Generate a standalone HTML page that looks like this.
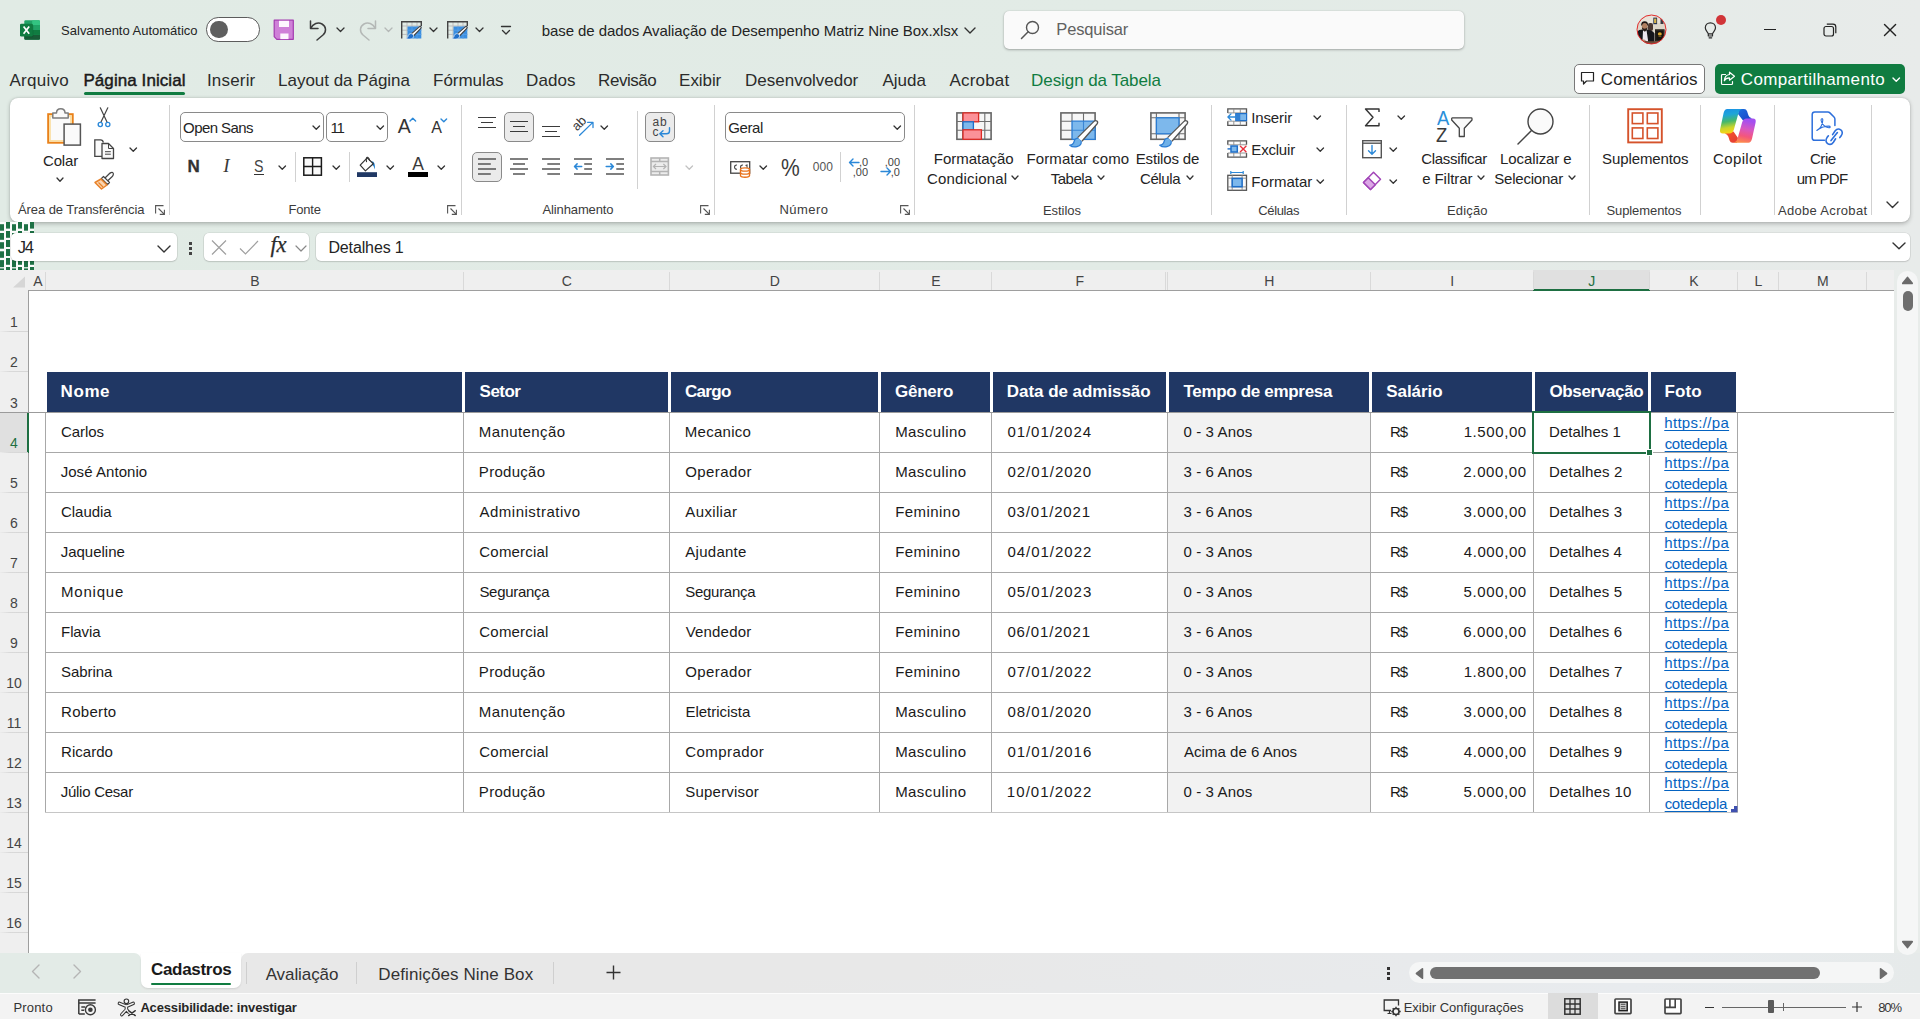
<!DOCTYPE html>
<html lang="pt-BR"><head><meta charset="utf-8"><title>base de dados Avaliação de Desempenho Matriz Nine Box.xlsx - Excel</title>
<style>
html,body{margin:0;padding:0;}
body{width:1920px;height:1019px;overflow:hidden;font-family:"Liberation Sans",sans-serif;color:#242424;}
#app{position:relative;width:1920px;height:1019px;overflow:hidden;background:linear-gradient(90deg,#e1ebe5 0%,#e2ebe6 60%,#e5ebe8 85%,#e8ebea 100%);}
.a{position:absolute;box-sizing:border-box;}
.t{position:absolute;white-space:nowrap;line-height:20px;}
.bl{display:inline-block;width:0;height:0;}
svg{overflow:visible;}
</style></head><body><div id="app">
<svg class="a" style="left:20px;top:19.5px;" width="20" height="20" viewBox="0 0 20 20">
<path d="M5.5 0.2 H18.8 Q20 0.2 20 1.4 V18.6 Q20 19.8 18.8 19.8 H5.5 Q4.3 19.8 4.3 18.6 V1.4 Q4.3 0.2 5.5 0.2 Z" fill="#21a366"/>
<path d="M12.2 0.2 H18.8 Q20 0.2 20 1.4 V5.1 H12.2 Z" fill="#33c481"/>
<rect x="4.3" y="5.1" width="7.9" height="4.9" fill="#107c41"/><rect x="12.2" y="5.1" width="7.8" height="4.9" fill="#21a366"/>
<rect x="4.3" y="10" width="7.9" height="4.9" fill="#185c37"/><rect x="12.2" y="10" width="7.8" height="4.9" fill="#107c41"/>
<path d="M4.3 14.9 H20 V18.6 Q20 19.8 18.8 19.8 H5.5 Q4.3 19.8 4.3 18.6 Z" fill="#185c37"/>
<path d="M4.3 4.5 H12 Q13.2 4.5 13.2 5.7 V16 Q13.2 17.2 12 17.2 H4.3 Z" fill="#0b4a27" opacity="0.45"/>
<rect x="0" y="3.8" width="12.8" height="12.8" rx="1.3" fill="#107c41"/>
<path d="M3.6 6.6 L9.2 13.8 M9.2 6.6 L3.6 13.8" stroke="#fff" stroke-width="1.7" fill="none"/></svg>
<span class="t" style="top:20.90px;font-size:13px;left:61.11px;letter-spacing:-0.007px;color:#242424;">Salvamento Automático</span>
<div class="a" style="left:206px;top:17.3px;width:54px;height:24.4px;border:1.3px solid #5c5c5c;border-radius:12.2px;background:#fff;"></div>
<div class="a" style="left:210.4px;top:20.9px;width:17.6px;height:17.6px;border-radius:9px;background:#5f5f5f;"></div>
<svg class="a" style="left:273px;top:19px;" width="22" height="22" viewBox="0 0 22 22"><path d="M1.2 1.2 H20.3 V20.3 H3.8 L1.2 17.7 Z" fill="#cf80d8" stroke="#a33bb0" stroke-width="1.2" stroke-linejoin="round"/>
<rect x="6" y="1.8" width="10" height="6.2" fill="#fdf6fe"/>
<rect x="7.3" y="14.5" width="8.2" height="5.6" fill="#fdf6fe"/></svg>
<svg class="a" style="left:308px;top:18.5px;" width="20" height="22" viewBox="0 0 20 22"><path d="M2.5 2 V9.5 H10 M2.8 9.3 C5 4.5 10 2.8 14 5 C18.5 7.5 18.5 13 15 16 L9 21" fill="none" stroke="#3b3b3b" stroke-width="1.5" stroke-linecap="round" stroke-linejoin="round"/></svg>
<svg class="a" style="left:335.0px;top:26.25px;" width="11" height="7" viewBox="0 0 11 7"><path d="M2 2 L5.5 5.5 L9 2" fill="none" stroke="#333" stroke-width="1.3" stroke-linecap="round" stroke-linejoin="round"/></svg>
<svg class="a" style="left:358px;top:19px;" width="20" height="22" viewBox="0 0 20 22"><path d="M17.5 2 V9.5 H10 M17.2 9.3 C15 4.5 10 2.8 6 5 C1.5 7.5 1.5 13 5 16 L11 21" fill="none" stroke="#b4b8b6" stroke-width="1.5" stroke-linecap="round" stroke-linejoin="round"/></svg>
<svg class="a" style="left:382.5px;top:26.25px;" width="11" height="7" viewBox="0 0 11 7"><path d="M2 2 L5.5 5.5 L9 2" fill="none" stroke="#b4b8b6" stroke-width="1.3" stroke-linecap="round" stroke-linejoin="round"/></svg>
<svg class="a" style="left:400.5px;top:21px;" width="22" height="20" viewBox="0 0 22 20"><path d="M6 0.6 V17.5 M11 0.6 V17.5 M16 0.6 V17.5 M0.6 5 H20.3 M0.6 9.2 H20.3 M0.6 13.4 H20.3" stroke="#bdbdbd" stroke-width="1" fill="none"/>
<rect x="6.5" y="5.5" width="13.8" height="12" fill="#3a8ee0"/>
<path d="M11 5.5 V17.5 M16 5.5 V17.5 M6.5 9.2 H20.3 M6.5 13.4 H20.3" stroke="#5aa2e8" stroke-width="0.8" fill="none"/>
<path d="M0.7 17.5 V0.7 H20.3 V5" fill="none" stroke="#444" stroke-width="1.4"/>
<path d="M10.3 12.8 L18.3 5.8 C19.5 4.8 20.8 6.2 19.8 7.3 L12.5 15" fill="#fff" stroke="#444" stroke-width="1.1" stroke-linejoin="round"/>
<path d="M4.5 17.3 C6.5 17 7 15.8 7.3 14.6 C7.8 12.6 10.3 12 11.8 13.3 C13.3 14.8 12.6 17.2 10.3 17.8 C8.3 18.3 6 18.2 4.5 17.3 Z" fill="#1f6fc9" stroke="#e8f1fb" stroke-width="0.7"/></svg>
<svg class="a" style="left:427.5px;top:26.25px;" width="11" height="7" viewBox="0 0 11 7"><path d="M2 2 L5.5 5.5 L9 2" fill="none" stroke="#333" stroke-width="1.3" stroke-linecap="round" stroke-linejoin="round"/></svg>
<svg class="a" style="left:446.5px;top:21px;" width="22" height="20" viewBox="0 0 22 20"><path d="M6 0.6 V17.5 M11 0.6 V17.5 M16 0.6 V17.5 M0.6 5 H20.3 M0.6 9.2 H20.3 M0.6 13.4 H20.3" stroke="#bdbdbd" stroke-width="1" fill="none"/>
<rect x="6.5" y="5.5" width="13.8" height="12" fill="#3a8ee0"/>
<path d="M11 5.5 V17.5 M16 5.5 V17.5 M6.5 9.2 H20.3 M6.5 13.4 H20.3" stroke="#5aa2e8" stroke-width="0.8" fill="none"/>
<path d="M0.7 17.5 V0.7 H20.3 V5" fill="none" stroke="#444" stroke-width="1.4"/>
<path d="M10.3 12.8 L18.3 5.8 C19.5 4.8 20.8 6.2 19.8 7.3 L12.5 15" fill="#fff" stroke="#444" stroke-width="1.1" stroke-linejoin="round"/>
<path d="M4.5 17.3 C6.5 17 7 15.8 7.3 14.6 C7.8 12.6 10.3 12 11.8 13.3 C13.3 14.8 12.6 17.2 10.3 17.8 C8.3 18.3 6 18.2 4.5 17.3 Z" fill="#1f6fc9" stroke="#e8f1fb" stroke-width="0.7"/></svg>
<svg class="a" style="left:474.0px;top:26.25px;" width="11" height="7" viewBox="0 0 11 7"><path d="M2 2 L5.5 5.5 L9 2" fill="none" stroke="#333" stroke-width="1.3" stroke-linecap="round" stroke-linejoin="round"/></svg>
<svg class="a" style="left:500px;top:25px;" width="12" height="12" viewBox="0 0 12 12"><path d="M1.5 1.5 H10.5" stroke="#333" stroke-width="1.3" stroke-linecap="round"/><path d="M2.5 5.5 L6 9 L9.5 5.5" fill="none" stroke="#333" stroke-width="1.3" stroke-linecap="round" stroke-linejoin="round"/></svg>
<span class="t" style="top:20.51px;font-size:15px;left:541.73px;letter-spacing:-0.077px;color:#242424;">base de dados Avaliação de Desempenho Matriz Nine Box.xlsx</span>
<svg class="a" style="left:963.0px;top:25.5px;" width="14" height="9" viewBox="0 0 14 9"><path d="M2 2 L7.0 7 L12 2" fill="none" stroke="#333" stroke-width="1.4" stroke-linecap="round" stroke-linejoin="round"/></svg>
<div class="a" style="left:1004px;top:11px;width:460px;height:38px;border-radius:5px;background:#fafafa;box-shadow:0 1px 2.5px rgba(0,0,0,.28),0 0 1px rgba(0,0,0,.2);"></div>
<svg class="a" style="left:1019px;top:19px;" width="22" height="22" viewBox="0 0 22 22"><circle cx="13.5" cy="8.5" r="6" fill="none" stroke="#555" stroke-width="1.4"/><path d="M9.2 12.8 L2.5 19.5" stroke="#555" stroke-width="1.5" stroke-linecap="round"/></svg>
<span class="t" style="top:19.02px;font-size:16.5px;left:1056.35px;letter-spacing:-0.181px;color:#616161;">Pesquisar</span>
<svg class="a" style="left:1636px;top:14.3px;" width="31" height="31" viewBox="0 0 31 31"><defs><clipPath id="avc"><circle cx="15.5" cy="15.5" r="14.4"/></clipPath></defs>
<g clip-path="url(#avc)">
<rect x="0" y="0" width="31" height="31" fill="#ded6ca"/>
<rect x="0" y="0" width="31" height="9" fill="#e9e3da"/>
<rect x="17.3" y="3.6" width="3.8" height="6.6" fill="#2a3550"/><rect x="18.1" y="4.6" width="2.2" height="4.4" fill="#d8b34a"/>
<rect x="24.5" y="5" width="3" height="5" fill="#3a3a42"/>
<rect x="12" y="9" width="5" height="8" rx="2" fill="#4a3630"/>
<ellipse cx="8.6" cy="10.3" rx="3.3" ry="3" fill="#1d1513"/>
<ellipse cx="8.7" cy="12.6" rx="2.8" ry="3.5" fill="#b27f60"/>
<path d="M5.9 13 Q6.5 14.6 8.7 14.7 Q10.9 14.6 11.5 13 Q11.6 16.6 8.7 17.2 Q5.8 16.6 5.9 13 Z" fill="#2a1c18"/>
<path d="M0 31 V19 Q2 15.8 6.3 15.6 L8.7 17.6 L11.2 15.6 Q16 16 18.5 19.5 V31 Z" fill="#15151a"/>
<path d="M7 16.6 L8.7 17.8 L10.6 16.6 L12.2 27.5 H6.5 Z" fill="#e9e5ee"/>
<rect x="19" y="15.3" width="9.6" height="12.3" fill="#17130f"/><rect x="19.9" y="16.2" width="7.8" height="10.5" fill="none" stroke="#3a332b" stroke-width="0.6"/>
<ellipse cx="23.8" cy="19.9" rx="2" ry="1.7" fill="#d8a62e"/><rect x="22.5" y="22.3" width="2.8" height="0.7" fill="#8f7130"/>
<path d="M3 31 V27.6 Q8 25.8 11 27.2 H31 V31 Z" fill="#6d4b3a"/>
<ellipse cx="7.2" cy="26.6" rx="2.2" ry="1.2" fill="#b98a6b"/>
</g>
<circle cx="15.5" cy="15.5" r="14.5" fill="none" stroke="#e12a2a" stroke-width="1"/></svg>
<svg class="a" style="left:1703px;top:20.6px;" width="16" height="20" viewBox="0 0 16 20"><path d="M5.3 12.8 C4.8 10.7 2.3 9.7 2.3 6.8 C2.3 4 4.5 1.9 7.4 1.9 C10.3 1.9 12.5 4 12.5 6.8 C12.5 9.7 10 10.7 9.5 12.8 Z M5.3 12.8 V15 H9.5 V12.8 M6.1 16.8 H8.7" fill="none" stroke="#2b2b2b" stroke-width="1.2" stroke-linecap="round" stroke-linejoin="round"/></svg>
<div class="a" style="left:1716px;top:15px;width:10px;height:10px;border-radius:5px;background:#d13438;"></div>
<div class="a" style="left:1764px;top:28.6px;width:12px;height:1.5px;background:#222;"></div>
<svg class="a" style="left:1823px;top:23px;" width="14" height="14" viewBox="0 0 14 14"><rect x="1" y="3.5" width="9.5" height="9.5" rx="2" fill="none" stroke="#222" stroke-width="1.2"/><path d="M3.8 1.2 H10 Q12.8 1.2 12.8 4 V10.2" fill="none" stroke="#222" stroke-width="1.2"/></svg>
<svg class="a" style="left:1883px;top:23px;" width="14" height="14" viewBox="0 0 14 14"><path d="M1.5 1.4 L12.6 12.6 M12.6 1.4 L1.5 12.6" stroke="#222" stroke-width="1.4" stroke-linecap="round"/></svg>
<span class="t" style="top:71.00px;font-size:17px;left:9.47px;letter-spacing:0.268px;color:#2b2b2b;">Arquivo</span>
<span class="t" style="top:71.00px;font-size:17px;left:83.41px;letter-spacing:0.077px;color:#1a1a1a;-webkit-text-stroke:0.45px #1a1a1a;">Página Inicial</span>
<span class="t" style="top:71.00px;font-size:17px;left:206.93px;letter-spacing:0.186px;color:#2b2b2b;">Inserir</span>
<span class="t" style="top:71.00px;font-size:17px;left:278.11px;letter-spacing:-0.030px;color:#2b2b2b;">Layout da Página</span>
<span class="t" style="top:71.00px;font-size:17px;left:433.11px;letter-spacing:-0.050px;color:#2b2b2b;">Fórmulas</span>
<span class="t" style="top:71.00px;font-size:17px;left:526.11px;letter-spacing:0.092px;color:#2b2b2b;">Dados</span>
<span class="t" style="top:71.00px;font-size:17px;left:598.11px;letter-spacing:-0.469px;color:#2b2b2b;">Revisão</span>
<span class="t" style="top:71.00px;font-size:17px;left:679.11px;letter-spacing:-0.068px;color:#2b2b2b;">Exibir</span>
<span class="t" style="top:71.00px;font-size:17px;left:745.11px;letter-spacing:-0.019px;color:#2b2b2b;">Desenvolvedor</span>
<span class="t" style="top:71.00px;font-size:17px;left:882.47px;letter-spacing:0.012px;color:#2b2b2b;">Ajuda</span>
<span class="t" style="top:71.00px;font-size:17px;left:949.47px;letter-spacing:0.177px;color:#2b2b2b;">Acrobat</span>
<span class="t" style="top:71.00px;font-size:17px;left:1031.11px;letter-spacing:-0.078px;color:#107c41;">Design da Tabela</span>
<div class="a" style="left:84px;top:92px;width:101px;height:3px;border-radius:1.5px;background:#107c41;"></div>
<div class="a" style="left:1574px;top:64px;width:131px;height:30px;border:1px solid #787878;border-radius:5px;background:#fff;"></div>
<svg class="a" style="left:1580px;top:71px;" width="15" height="15" viewBox="0 0 15 15"><path d="M1.5 1.5 H13.5 V10 H6.5 L3.5 13 V10 H1.5 Z" fill="none" stroke="#222" stroke-width="1.2" stroke-linejoin="round"/></svg>
<span class="t" style="top:70.00px;font-size:17px;left:1600.84px;letter-spacing:0.040px;color:#242424;">Comentários</span>
<div class="a" style="left:1715px;top:64px;width:190px;height:30px;border-radius:5px;background:#107c41;"></div>
<svg class="a" style="left:1720.2px;top:71px;" width="16" height="15" viewBox="0 0 16 15"><path d="M5.5 3.5 H2.5 Q1.5 3.5 1.5 4.5 V12.5 Q1.5 13.5 2.5 13.5 H11.5 Q12.5 13.5 12.5 12.5 V10.5" fill="none" stroke="#fff" stroke-width="1.2" stroke-linecap="round"/><path d="M9.5 1.2 L14.5 5.2 L9.5 9.2 V6.9 C7 6.9 5.2 7.8 4.3 9.8 C4.5 6.2 6.5 3.8 9.5 3.5 Z" fill="none" stroke="#fff" stroke-width="1.2" stroke-linejoin="round"/></svg>
<span class="t" style="top:70.00px;font-size:17px;left:1740.84px;letter-spacing:0.331px;color:#ffffff;">Compartilhamento</span>
<svg class="a" style="left:1891.25px;top:76.35px;" width="10" height="7" viewBox="0 0 10 7"><path d="M2 2 L5.25 5.3 L8.5 2" fill="none" stroke="#fff" stroke-width="1.4" stroke-linecap="round" stroke-linejoin="round"/></svg>
<div class="a" style="left:9.8px;top:97.8px;width:1900.2px;height:124.2px;border-radius:8px;background:#fff;box-shadow:0 1.5px 4px rgba(0,0,0,.22),0 0 1.5px rgba(0,0,0,.18);"></div>
<div class="a" style="left:169px;top:105px;width:1px;height:110px;background:#d1d1d1;"></div>
<div class="a" style="left:461px;top:105px;width:1px;height:110px;background:#d1d1d1;"></div>
<div class="a" style="left:714px;top:105px;width:1px;height:110px;background:#d1d1d1;"></div>
<div class="a" style="left:914px;top:105px;width:1px;height:110px;background:#d1d1d1;"></div>
<div class="a" style="left:1211px;top:105px;width:1px;height:110px;background:#d1d1d1;"></div>
<div class="a" style="left:1346px;top:105px;width:1px;height:110px;background:#d1d1d1;"></div>
<div class="a" style="left:1589px;top:105px;width:1px;height:110px;background:#d1d1d1;"></div>
<div class="a" style="left:1700px;top:105px;width:1px;height:110px;background:#d1d1d1;"></div>
<div class="a" style="left:1774px;top:105px;width:1px;height:110px;background:#d1d1d1;"></div>
<div class="a" style="left:1871px;top:105px;width:1px;height:110px;background:#d1d1d1;"></div>
<span class="t" style="top:199.80px;font-size:13px;left:17.97px;letter-spacing:-0.069px;color:#3b3b3b;">Área de Transferência</span>
<span class="t" style="top:199.80px;font-size:13px;left:288.43px;letter-spacing:-0.151px;color:#3b3b3b;">Fonte</span>
<span class="t" style="top:199.80px;font-size:13px;left:542.47px;letter-spacing:-0.121px;color:#3b3b3b;">Alinhamento</span>
<span class="t" style="top:199.80px;font-size:13px;left:779.43px;letter-spacing:0.472px;color:#3b3b3b;">Número</span>
<span class="t" style="top:200.50px;font-size:13px;left:1042.93px;letter-spacing:-0.043px;color:#3b3b3b;">Estilos</span>
<span class="t" style="top:200.50px;font-size:13px;left:1258.34px;letter-spacing:-0.372px;color:#3b3b3b;">Células</span>
<span class="t" style="top:200.80px;font-size:13px;left:1446.93px;letter-spacing:0.172px;color:#3b3b3b;">Edição</span>
<span class="t" style="top:200.80px;font-size:13px;left:1606.41px;letter-spacing:-0.083px;color:#3b3b3b;">Suplementos</span>
<span class="t" style="top:200.80px;font-size:13px;left:1777.97px;letter-spacing:0.319px;color:#3b3b3b;">Adobe Acrobat</span>
<svg class="a" style="left:155px;top:205px;" width="10" height="10" viewBox="0 0 10 10"><path d="M0.6 8.5 V0.6 H8.5" fill="none" stroke="#555" stroke-width="1.1"/><path d="M3.5 3.5 L9.2 9.2 M9.4 4.8 V9.4 H4.8" fill="none" stroke="#555" stroke-width="1.1"/></svg>
<svg class="a" style="left:447px;top:205px;" width="10" height="10" viewBox="0 0 10 10"><path d="M0.6 8.5 V0.6 H8.5" fill="none" stroke="#555" stroke-width="1.1"/><path d="M3.5 3.5 L9.2 9.2 M9.4 4.8 V9.4 H4.8" fill="none" stroke="#555" stroke-width="1.1"/></svg>
<svg class="a" style="left:699.5px;top:205px;" width="10" height="10" viewBox="0 0 10 10"><path d="M0.6 8.5 V0.6 H8.5" fill="none" stroke="#555" stroke-width="1.1"/><path d="M3.5 3.5 L9.2 9.2 M9.4 4.8 V9.4 H4.8" fill="none" stroke="#555" stroke-width="1.1"/></svg>
<svg class="a" style="left:900px;top:205px;" width="10" height="10" viewBox="0 0 10 10"><path d="M0.6 8.5 V0.6 H8.5" fill="none" stroke="#555" stroke-width="1.1"/><path d="M3.5 3.5 L9.2 9.2 M9.4 4.8 V9.4 H4.8" fill="none" stroke="#555" stroke-width="1.1"/></svg>
<svg class="a" style="left:0px;top:222px;" width="34" height="48" viewBox="0 0 34 48"><rect x="0" y="0" width="34" height="48" fill="#fbfcfb"/><rect x="0" y="2.2" width="4" height="6.5" fill="#1e7145"/><rect x="0" y="11" width="4" height="6.8" fill="#1e7145"/><rect x="0" y="20.2" width="4" height="6.5" fill="#1e7145"/><rect x="0" y="29.3" width="4" height="6.5" fill="#1e7145"/><rect x="0" y="38.1" width="4" height="7.1" fill="#1e7145"/><rect x="0" y="46.4" width="4" height="1.6" fill="#1e7145"/><rect x="6" y="0" width="4" height="6.6" fill="#1e7145"/><rect x="6" y="9" width="4" height="6.8" fill="#1e7145"/><rect x="6" y="18" width="4" height="7.0" fill="#1e7145"/><rect x="6" y="27" width="4" height="7.0" fill="#1e7145"/><rect x="6" y="36" width="4" height="6.8" fill="#1e7145"/><rect x="6" y="45" width="4" height="3.0" fill="#1e7145"/><rect x="12" y="2.2" width="4" height="6.5" fill="#1e7145"/><rect x="12" y="11" width="4" height="6.8" fill="#1e7145"/><rect x="12" y="20.2" width="4" height="6.5" fill="#1e7145"/><rect x="12" y="29.3" width="4" height="6.5" fill="#1e7145"/><rect x="12" y="38.1" width="4" height="7.1" fill="#1e7145"/><rect x="12" y="46.4" width="4" height="1.6" fill="#1e7145"/><rect x="18" y="0" width="4" height="6.6" fill="#1e7145"/><rect x="18" y="9" width="4" height="6.8" fill="#1e7145"/><rect x="18" y="18" width="4" height="7.0" fill="#1e7145"/><rect x="18" y="27" width="4" height="7.0" fill="#1e7145"/><rect x="18" y="36" width="4" height="6.8" fill="#1e7145"/><rect x="18" y="45" width="4" height="3.0" fill="#1e7145"/><rect x="24" y="2.2" width="4" height="6.5" fill="#1e7145"/><rect x="24" y="11" width="4" height="6.8" fill="#1e7145"/><rect x="24" y="20.2" width="4" height="6.5" fill="#1e7145"/><rect x="24" y="29.3" width="4" height="6.5" fill="#1e7145"/><rect x="24" y="38.1" width="4" height="7.1" fill="#1e7145"/><rect x="24" y="46.4" width="4" height="1.6" fill="#1e7145"/><rect x="30" y="0" width="4" height="6.6" fill="#1e7145"/><rect x="30" y="9" width="4" height="6.8" fill="#1e7145"/><rect x="30" y="18" width="4" height="7.0" fill="#1e7145"/><rect x="30" y="27" width="4" height="7.0" fill="#1e7145"/><rect x="30" y="36" width="4" height="6.8" fill="#1e7145"/><rect x="30" y="45" width="4" height="3.0" fill="#1e7145"/></svg>
<div class="a" style="left:11px;top:232.7px;width:166px;height:28.5px;border-radius:5px;background:#fff;box-shadow:0 0 0 0.6px rgba(0,0,0,.10),0 1px 1.5px rgba(0,0,0,.12);"></div>
<span class="t" style="top:236.61px;font-size:16.5px;left:17.64px;letter-spacing:-1.200px;color:#242424;">J4</span>
<svg class="a" style="left:156.3px;top:243.5px;" width="16" height="10" viewBox="0 0 16 10"><path d="M2 2 L8.0 8 L14 2" fill="none" stroke="#333" stroke-width="1.4" stroke-linecap="round" stroke-linejoin="round"/></svg>
<div class="a" style="left:189px;top:241.5px;width:3px;height:3px;background:#444;"></div>
<div class="a" style="left:189px;top:246.5px;width:3px;height:3px;background:#444;"></div>
<div class="a" style="left:189px;top:251.5px;width:3px;height:3px;background:#444;"></div>
<div class="a" style="left:204px;top:232.7px;width:105px;height:28.5px;border-radius:5px;background:#fff;box-shadow:0 0 0 0.6px rgba(0,0,0,.10),0 1px 1.5px rgba(0,0,0,.12);"></div>
<svg class="a" style="left:211px;top:240px;" width="16" height="15" viewBox="0 0 16 15"><path d="M1 0.5 L15 14.5 M15 0.5 L1 14.5" stroke="#a0a0a0" stroke-width="1.2" fill="none"/></svg>
<svg class="a" style="left:239px;top:240px;" width="20" height="15" viewBox="0 0 20 15"><path d="M1 8.5 L6.5 14 L19 1" stroke="#a0a0a0" stroke-width="1.2" fill="none"/></svg>
<span class="t" style="top:235.20px;font-size:22.5px;left:270.55px;letter-spacing:-0.300px;color:#2b2b2b;font-style:italic;font-family:'Liberation Serif', serif;-webkit-text-stroke:0.25px #2b2b2b;">fx</span>
<svg class="a" style="left:293.5px;top:244.0px;" width="14" height="9" viewBox="0 0 14 9"><path d="M2 2 L7.0 7 L12 2" fill="none" stroke="#888" stroke-width="1.2" stroke-linecap="round" stroke-linejoin="round"/></svg>
<div class="a" style="left:316px;top:232.7px;width:1593.5px;height:28.5px;border-radius:5px;background:#fff;box-shadow:0 0 0 0.6px rgba(0,0,0,.10),0 1px 1.5px rgba(0,0,0,.12);"></div>
<span class="t" style="top:237.61px;font-size:16px;left:328.39px;letter-spacing:-0.123px;color:#242424;">Detalhes 1</span>
<svg class="a" style="left:1890.5px;top:241.1px;" width="16" height="9" viewBox="0 0 16 9"><path d="M2 2 L8.0 7.8 L14 2" fill="none" stroke="#333" stroke-width="1.4" stroke-linecap="round" stroke-linejoin="round"/></svg>
<div class="a" style="left:0px;top:270px;width:1894px;height:683px;background:#fff;"></div>
<div class="a" style="left:0px;top:270px;width:1894px;height:21px;background:#efefef;"></div>
<div class="a" style="left:0px;top:291px;width:28px;height:662px;background:#efefef;"></div>
<svg class="a" style="left:12px;top:276px;" width="14" height="12" viewBox="0 0 14 12"><path d="M13 0.5 V11.5 H1 Z" fill="#d6d6d6"/></svg>
<div class="a" style="left:28px;top:290px;width:1866px;height:1.2px;background:#9e9e9e;"></div>
<div class="a" style="left:28px;top:290px;width:1.2px;height:663px;background:#9e9e9e;"></div>
<div class="a" style="left:1533px;top:270px;width:116.5px;height:19px;background:#e0e0e0;"></div>
<div class="a" style="left:1533px;top:288.5px;width:116.5px;height:2.5px;background:#1e6f42;"></div>
<div class="a" style="left:45px;top:272px;width:1px;height:18px;background:#d9d9d9;"></div>
<span class="t" style="top:271.21px;font-size:14px;left:37.80px;color:#444;transform:translateX(-50%);">A</span>
<div class="a" style="left:463px;top:272px;width:1px;height:18px;background:#d9d9d9;"></div>
<span class="t" style="top:271.21px;font-size:14px;left:254.80px;color:#444;transform:translateX(-50%);">B</span>
<div class="a" style="left:669px;top:272px;width:1px;height:18px;background:#d9d9d9;"></div>
<span class="t" style="top:271.21px;font-size:14px;left:566.80px;color:#444;transform:translateX(-50%);">C</span>
<div class="a" style="left:879px;top:272px;width:1px;height:18px;background:#d9d9d9;"></div>
<span class="t" style="top:271.21px;font-size:14px;left:774.80px;color:#444;transform:translateX(-50%);">D</span>
<div class="a" style="left:991px;top:272px;width:1px;height:18px;background:#d9d9d9;"></div>
<span class="t" style="top:271.21px;font-size:14px;left:935.80px;color:#444;transform:translateX(-50%);">E</span>
<div class="a" style="left:1167px;top:272px;width:1px;height:18px;background:#d9d9d9;"></div>
<span class="t" style="top:271.21px;font-size:14px;left:1079.80px;color:#444;transform:translateX(-50%);">F</span>
<div class="a" style="left:1370px;top:272px;width:1px;height:18px;background:#d9d9d9;"></div>
<span class="t" style="top:271.21px;font-size:14px;left:1269.30px;color:#444;transform:translateX(-50%);">H</span>
<div class="a" style="left:1533px;top:272px;width:1px;height:18px;background:#d9d9d9;"></div>
<span class="t" style="top:271.21px;font-size:14px;left:1452.30px;color:#444;transform:translateX(-50%);">I</span>
<div class="a" style="left:1649px;top:272px;width:1px;height:18px;background:#d9d9d9;"></div>
<span class="t" style="top:271.21px;font-size:14px;left:1591.80px;color:#1e6f42;transform:translateX(-50%);">J</span>
<div class="a" style="left:1737px;top:272px;width:1px;height:18px;background:#d9d9d9;"></div>
<span class="t" style="top:271.21px;font-size:14px;left:1693.80px;color:#444;transform:translateX(-50%);">K</span>
<div class="a" style="left:1778px;top:272px;width:1px;height:18px;background:#d9d9d9;"></div>
<span class="t" style="top:271.21px;font-size:14px;left:1758.30px;color:#444;transform:translateX(-50%);">L</span>
<div class="a" style="left:1866px;top:272px;width:1px;height:18px;background:#d9d9d9;"></div>
<span class="t" style="top:271.21px;font-size:14px;left:1822.80px;color:#444;transform:translateX(-50%);">M</span>
<div class="a" style="left:1165px;top:272px;width:1px;height:18px;background:#d9d9d9;"></div>
<div class="a" style="left:0px;top:331px;width:28px;height:1px;background:linear-gradient(90deg,#ececec 0,#d9d9d9 35%,#d6d6d6 100%);"></div>
<span class="t" style="top:312.21px;font-size:14px;left:14.00px;color:#444;transform:translateX(-50%);">1</span>
<div class="a" style="left:0px;top:371px;width:28px;height:1px;background:linear-gradient(90deg,#ececec 0,#d9d9d9 35%,#d6d6d6 100%);"></div>
<span class="t" style="top:352.21px;font-size:14px;left:14.00px;color:#444;transform:translateX(-50%);">2</span>
<span class="t" style="top:393.21px;font-size:14px;left:14.00px;color:#444;transform:translateX(-50%);">3</span>
<div class="a" style="left:0px;top:413px;width:27px;height:39px;background:#e0e0e0;"></div>
<div class="a" style="left:26.5px;top:413px;width:2.2px;height:39.5px;background:#1e6f42;"></div>
<div class="a" style="left:0px;top:452px;width:28px;height:1px;background:linear-gradient(90deg,#ececec 0,#d9d9d9 35%,#d6d6d6 100%);"></div>
<span class="t" style="top:433.21px;font-size:14px;left:14.00px;color:#1e6f42;transform:translateX(-50%);">4</span>
<div class="a" style="left:0px;top:492px;width:28px;height:1px;background:linear-gradient(90deg,#ececec 0,#d9d9d9 35%,#d6d6d6 100%);"></div>
<span class="t" style="top:473.21px;font-size:14px;left:14.00px;color:#444;transform:translateX(-50%);">5</span>
<div class="a" style="left:0px;top:532px;width:28px;height:1px;background:linear-gradient(90deg,#ececec 0,#d9d9d9 35%,#d6d6d6 100%);"></div>
<span class="t" style="top:513.21px;font-size:14px;left:14.00px;color:#444;transform:translateX(-50%);">6</span>
<div class="a" style="left:0px;top:572px;width:28px;height:1px;background:linear-gradient(90deg,#ececec 0,#d9d9d9 35%,#d6d6d6 100%);"></div>
<span class="t" style="top:553.21px;font-size:14px;left:14.00px;color:#444;transform:translateX(-50%);">7</span>
<div class="a" style="left:0px;top:612px;width:28px;height:1px;background:linear-gradient(90deg,#ececec 0,#d9d9d9 35%,#d6d6d6 100%);"></div>
<span class="t" style="top:593.21px;font-size:14px;left:14.00px;color:#444;transform:translateX(-50%);">8</span>
<div class="a" style="left:0px;top:652px;width:28px;height:1px;background:linear-gradient(90deg,#ececec 0,#d9d9d9 35%,#d6d6d6 100%);"></div>
<span class="t" style="top:633.21px;font-size:14px;left:14.00px;color:#444;transform:translateX(-50%);">9</span>
<div class="a" style="left:0px;top:692px;width:28px;height:1px;background:linear-gradient(90deg,#ececec 0,#d9d9d9 35%,#d6d6d6 100%);"></div>
<span class="t" style="top:673.21px;font-size:14px;left:14.00px;color:#444;transform:translateX(-50%);">10</span>
<div class="a" style="left:0px;top:732px;width:28px;height:1px;background:linear-gradient(90deg,#ececec 0,#d9d9d9 35%,#d6d6d6 100%);"></div>
<span class="t" style="top:713.21px;font-size:14px;left:14.00px;color:#444;transform:translateX(-50%);">11</span>
<div class="a" style="left:0px;top:772px;width:28px;height:1px;background:linear-gradient(90deg,#ececec 0,#d9d9d9 35%,#d6d6d6 100%);"></div>
<span class="t" style="top:753.21px;font-size:14px;left:14.00px;color:#444;transform:translateX(-50%);">12</span>
<div class="a" style="left:0px;top:812px;width:28px;height:1px;background:linear-gradient(90deg,#ececec 0,#d9d9d9 35%,#d6d6d6 100%);"></div>
<span class="t" style="top:793.21px;font-size:14px;left:14.00px;color:#444;transform:translateX(-50%);">13</span>
<div class="a" style="left:0px;top:852px;width:28px;height:1px;background:linear-gradient(90deg,#ececec 0,#d9d9d9 35%,#d6d6d6 100%);"></div>
<span class="t" style="top:833.21px;font-size:14px;left:14.00px;color:#444;transform:translateX(-50%);">14</span>
<div class="a" style="left:0px;top:892px;width:28px;height:1px;background:linear-gradient(90deg,#ececec 0,#d9d9d9 35%,#d6d6d6 100%);"></div>
<span class="t" style="top:873.21px;font-size:14px;left:14.00px;color:#444;transform:translateX(-50%);">15</span>
<div class="a" style="left:0px;top:932px;width:28px;height:1px;background:linear-gradient(90deg,#ececec 0,#d9d9d9 35%,#d6d6d6 100%);"></div>
<span class="t" style="top:913.21px;font-size:14px;left:14.00px;color:#444;transform:translateX(-50%);">16</span>
<div class="a" style="left:47px;top:372px;width:415px;height:40px;background:#203764;"></div>
<span class="t" style="top:382.00px;font-size:17px;left:60.56px;letter-spacing:0.595px;color:#fff;font-weight:bold;">Nome</span>
<div class="a" style="left:465px;top:372px;width:203px;height:40px;background:#203764;"></div>
<span class="t" style="top:382.00px;font-size:17px;left:479.61px;letter-spacing:-0.555px;color:#fff;font-weight:bold;">Setor</span>
<div class="a" style="left:671px;top:372px;width:207px;height:40px;background:#203764;"></div>
<span class="t" style="top:382.00px;font-size:17px;left:685.00px;letter-spacing:-0.691px;color:#fff;font-weight:bold;">Cargo</span>
<div class="a" style="left:881px;top:372px;width:109px;height:40px;background:#203764;"></div>
<span class="t" style="top:382.00px;font-size:17px;left:895.00px;letter-spacing:-0.234px;color:#fff;font-weight:bold;">Gênero</span>
<div class="a" style="left:993px;top:372px;width:173px;height:40px;background:#203764;"></div>
<span class="t" style="top:382.00px;font-size:17px;left:1006.86px;letter-spacing:-0.051px;color:#fff;font-weight:bold;">Data de admissão</span>
<div class="a" style="left:1169px;top:372px;width:200px;height:40px;background:#203764;"></div>
<span class="t" style="top:382.00px;font-size:17px;left:1183.51px;letter-spacing:-0.320px;color:#fff;font-weight:bold;">Tempo de empresa</span>
<div class="a" style="left:1372px;top:372px;width:160px;height:40px;background:#203764;"></div>
<span class="t" style="top:382.00px;font-size:17px;left:1386.21px;letter-spacing:-0.042px;color:#fff;font-weight:bold;">Salário</span>
<div class="a" style="left:1535px;top:372px;width:113px;height:40px;background:#203764;"></div>
<span class="t" style="top:382.00px;font-size:17px;left:1549.40px;letter-spacing:-0.342px;color:#fff;font-weight:bold;">Observação</span>
<div class="a" style="left:1651px;top:372px;width:85px;height:40px;background:#203764;"></div>
<span class="t" style="top:382.00px;font-size:17px;left:1664.56px;letter-spacing:0.091px;color:#fff;font-weight:bold;">Foto</span>
<div class="a" style="left:0px;top:412px;width:1894px;height:1px;background:#9b9b9b;"></div>
<div class="a" style="left:1168px;top:413px;width:202px;height:399px;background:#f2f2f2;"></div>
<div class="a" style="left:45px;top:413px;width:1px;height:400px;background:#a8a8a8;"></div>
<div class="a" style="left:463px;top:413px;width:1px;height:400px;background:#a8a8a8;"></div>
<div class="a" style="left:669px;top:413px;width:1px;height:400px;background:#a8a8a8;"></div>
<div class="a" style="left:879px;top:413px;width:1px;height:400px;background:#a8a8a8;"></div>
<div class="a" style="left:991px;top:413px;width:1px;height:400px;background:#a8a8a8;"></div>
<div class="a" style="left:1167px;top:413px;width:1px;height:400px;background:#a8a8a8;"></div>
<div class="a" style="left:1370px;top:413px;width:1px;height:400px;background:#a8a8a8;"></div>
<div class="a" style="left:1533px;top:413px;width:1px;height:400px;background:#a8a8a8;"></div>
<div class="a" style="left:1649px;top:413px;width:1px;height:400px;background:#a8a8a8;"></div>
<div class="a" style="left:1737px;top:413px;width:1px;height:400px;background:#a8a8a8;"></div>
<div class="a" style="left:45px;top:452px;width:1693px;height:1px;background:#a8a8a8;"></div>
<div class="a" style="left:45px;top:492px;width:1693px;height:1px;background:#a8a8a8;"></div>
<div class="a" style="left:45px;top:532px;width:1693px;height:1px;background:#a8a8a8;"></div>
<div class="a" style="left:45px;top:572px;width:1693px;height:1px;background:#a8a8a8;"></div>
<div class="a" style="left:45px;top:612px;width:1693px;height:1px;background:#a8a8a8;"></div>
<div class="a" style="left:45px;top:652px;width:1693px;height:1px;background:#a8a8a8;"></div>
<div class="a" style="left:45px;top:692px;width:1693px;height:1px;background:#a8a8a8;"></div>
<div class="a" style="left:45px;top:732px;width:1693px;height:1px;background:#a8a8a8;"></div>
<div class="a" style="left:45px;top:772px;width:1693px;height:1px;background:#a8a8a8;"></div>
<div class="a" style="left:45px;top:812px;width:1693px;height:1px;background:#c6c6c6;"></div>
<span class="t" style="top:422.01px;font-size:15px;left:60.94px;letter-spacing:-0.051px;color:#1a1a1a;">Carlos</span>
<span class="t" style="top:422.01px;font-size:15px;left:478.87px;letter-spacing:0.400px;color:#1a1a1a;">Manutenção</span>
<span class="t" style="top:422.01px;font-size:15px;left:684.77px;letter-spacing:0.280px;color:#1a1a1a;">Mecanico</span>
<span class="t" style="top:422.01px;font-size:15px;left:895.17px;letter-spacing:0.416px;color:#1a1a1a;">Masculino</span>
<span class="t" style="top:422.01px;font-size:15px;left:1007.41px;letter-spacing:0.950px;color:#1a1a1a;">01/01/2024</span>
<span class="t" style="top:422.01px;font-size:15px;left:1183.41px;letter-spacing:0.131px;color:#1a1a1a;">0 - 3 Anos</span>
<span class="t" style="top:422.01px;font-size:15px;left:1390.07px;letter-spacing:-1.200px;color:#1a1a1a;">R$</span>
<span class="t" style="top:422.01px;font-size:15px;right:393.22px;letter-spacing:0.591px;color:#1a1a1a;">1.500,00</span>
<span class="t" style="top:422.01px;font-size:15px;left:1549.07px;letter-spacing:-0.006px;color:#1a1a1a;">Detalhes 1</span>
<span class="t" style="top:413.01px;font-size:15px;left:1664.26px;letter-spacing:0.313px;color:#0563c1;text-decoration:underline;text-underline-offset:1.5px;text-decoration-thickness:1px;text-decoration-skip-ink:none;">https://pa</span>
<span class="t" style="top:433.51px;font-size:15px;left:1664.66px;letter-spacing:-0.303px;color:#0563c1;text-decoration:underline;text-underline-offset:1.5px;text-decoration-thickness:1px;text-decoration-skip-ink:none;">cotedepla</span>
<span class="t" style="top:462.01px;font-size:15px;left:60.67px;letter-spacing:0.060px;color:#1a1a1a;">José Antonio</span>
<span class="t" style="top:462.01px;font-size:15px;left:478.87px;letter-spacing:0.277px;color:#1a1a1a;">Produção</span>
<span class="t" style="top:462.01px;font-size:15px;left:685.29px;letter-spacing:0.412px;color:#1a1a1a;">Operador</span>
<span class="t" style="top:462.01px;font-size:15px;left:895.17px;letter-spacing:0.416px;color:#1a1a1a;">Masculino</span>
<span class="t" style="top:462.01px;font-size:15px;left:1007.41px;letter-spacing:0.966px;color:#1a1a1a;">02/01/2020</span>
<span class="t" style="top:462.01px;font-size:15px;left:1183.43px;letter-spacing:0.130px;color:#1a1a1a;">3 - 6 Anos</span>
<span class="t" style="top:462.01px;font-size:15px;left:1390.07px;letter-spacing:-1.200px;color:#1a1a1a;">R$</span>
<span class="t" style="top:462.01px;font-size:15px;right:393.18px;letter-spacing:0.636px;color:#1a1a1a;">2.000,00</span>
<span class="t" style="top:462.01px;font-size:15px;left:1549.07px;letter-spacing:0.163px;color:#1a1a1a;">Detalhes 2</span>
<span class="t" style="top:453.01px;font-size:15px;left:1664.26px;letter-spacing:0.313px;color:#0563c1;text-decoration:underline;text-underline-offset:1.5px;text-decoration-thickness:1px;text-decoration-skip-ink:none;">https://pa</span>
<span class="t" style="top:473.51px;font-size:15px;left:1664.66px;letter-spacing:-0.303px;color:#0563c1;text-decoration:underline;text-underline-offset:1.5px;text-decoration-thickness:1px;text-decoration-skip-ink:none;">cotedepla</span>
<span class="t" style="top:502.01px;font-size:15px;left:60.94px;letter-spacing:-0.019px;color:#1a1a1a;">Claudia</span>
<span class="t" style="top:502.01px;font-size:15px;left:479.47px;letter-spacing:0.497px;color:#1a1a1a;">Administrativo</span>
<span class="t" style="top:502.01px;font-size:15px;left:685.37px;letter-spacing:0.342px;color:#1a1a1a;">Auxiliar</span>
<span class="t" style="top:502.01px;font-size:15px;left:895.17px;letter-spacing:0.451px;color:#1a1a1a;">Feminino</span>
<span class="t" style="top:502.01px;font-size:15px;left:1007.41px;letter-spacing:0.838px;color:#1a1a1a;">03/01/2021</span>
<span class="t" style="top:502.01px;font-size:15px;left:1183.43px;letter-spacing:0.130px;color:#1a1a1a;">3 - 6 Anos</span>
<span class="t" style="top:502.01px;font-size:15px;left:1390.07px;letter-spacing:-1.200px;color:#1a1a1a;">R$</span>
<span class="t" style="top:502.01px;font-size:15px;right:393.20px;letter-spacing:0.610px;color:#1a1a1a;">3.000,00</span>
<span class="t" style="top:502.01px;font-size:15px;left:1549.07px;letter-spacing:0.152px;color:#1a1a1a;">Detalhes 3</span>
<span class="t" style="top:493.01px;font-size:15px;left:1664.26px;letter-spacing:0.313px;color:#0563c1;text-decoration:underline;text-underline-offset:1.5px;text-decoration-thickness:1px;text-decoration-skip-ink:none;">https://pa</span>
<span class="t" style="top:513.51px;font-size:15px;left:1664.66px;letter-spacing:-0.303px;color:#0563c1;text-decoration:underline;text-underline-offset:1.5px;text-decoration-thickness:1px;text-decoration-skip-ink:none;">cotedepla</span>
<span class="t" style="top:542.01px;font-size:15px;left:60.67px;letter-spacing:-0.002px;color:#1a1a1a;">Jaqueline</span>
<span class="t" style="top:542.01px;font-size:15px;left:479.34px;letter-spacing:0.194px;color:#1a1a1a;">Comercial</span>
<span class="t" style="top:542.01px;font-size:15px;left:685.37px;letter-spacing:0.254px;color:#1a1a1a;">Ajudante</span>
<span class="t" style="top:542.01px;font-size:15px;left:895.17px;letter-spacing:0.451px;color:#1a1a1a;">Feminino</span>
<span class="t" style="top:542.01px;font-size:15px;left:1007.41px;letter-spacing:0.985px;color:#1a1a1a;">04/01/2022</span>
<span class="t" style="top:542.01px;font-size:15px;left:1183.41px;letter-spacing:0.131px;color:#1a1a1a;">0 - 3 Anos</span>
<span class="t" style="top:542.01px;font-size:15px;left:1390.07px;letter-spacing:-1.200px;color:#1a1a1a;">R$</span>
<span class="t" style="top:542.01px;font-size:15px;right:393.24px;letter-spacing:0.577px;color:#1a1a1a;">4.000,00</span>
<span class="t" style="top:542.01px;font-size:15px;left:1549.07px;letter-spacing:0.128px;color:#1a1a1a;">Detalhes 4</span>
<span class="t" style="top:533.01px;font-size:15px;left:1664.26px;letter-spacing:0.313px;color:#0563c1;text-decoration:underline;text-underline-offset:1.5px;text-decoration-thickness:1px;text-decoration-skip-ink:none;">https://pa</span>
<span class="t" style="top:553.51px;font-size:15px;left:1664.66px;letter-spacing:-0.303px;color:#0563c1;text-decoration:underline;text-underline-offset:1.5px;text-decoration-thickness:1px;text-decoration-skip-ink:none;">cotedepla</span>
<span class="t" style="top:582.01px;font-size:15px;left:61.07px;letter-spacing:0.775px;color:#1a1a1a;">Monique</span>
<span class="t" style="top:582.01px;font-size:15px;left:479.42px;letter-spacing:-0.298px;color:#1a1a1a;">Segurança</span>
<span class="t" style="top:582.01px;font-size:15px;left:685.32px;letter-spacing:-0.298px;color:#1a1a1a;">Segurança</span>
<span class="t" style="top:582.01px;font-size:15px;left:895.17px;letter-spacing:0.451px;color:#1a1a1a;">Feminino</span>
<span class="t" style="top:582.01px;font-size:15px;left:1007.41px;letter-spacing:0.974px;color:#1a1a1a;">05/01/2023</span>
<span class="t" style="top:582.01px;font-size:15px;left:1183.41px;letter-spacing:0.131px;color:#1a1a1a;">0 - 3 Anos</span>
<span class="t" style="top:582.01px;font-size:15px;left:1390.07px;letter-spacing:-1.200px;color:#1a1a1a;">R$</span>
<span class="t" style="top:582.01px;font-size:15px;right:393.20px;letter-spacing:0.614px;color:#1a1a1a;">5.000,00</span>
<span class="t" style="top:582.01px;font-size:15px;left:1549.07px;letter-spacing:0.149px;color:#1a1a1a;">Detalhes 5</span>
<span class="t" style="top:573.01px;font-size:15px;left:1664.26px;letter-spacing:0.313px;color:#0563c1;text-decoration:underline;text-underline-offset:1.5px;text-decoration-thickness:1px;text-decoration-skip-ink:none;">https://pa</span>
<span class="t" style="top:593.51px;font-size:15px;left:1664.66px;letter-spacing:-0.303px;color:#0563c1;text-decoration:underline;text-underline-offset:1.5px;text-decoration-thickness:1px;text-decoration-skip-ink:none;">cotedepla</span>
<span class="t" style="top:622.01px;font-size:15px;left:61.07px;letter-spacing:-0.097px;color:#1a1a1a;">Flavia</span>
<span class="t" style="top:622.01px;font-size:15px;left:479.34px;letter-spacing:0.194px;color:#1a1a1a;">Comercial</span>
<span class="t" style="top:622.01px;font-size:15px;left:685.63px;letter-spacing:0.197px;color:#1a1a1a;">Vendedor</span>
<span class="t" style="top:622.01px;font-size:15px;left:895.17px;letter-spacing:0.451px;color:#1a1a1a;">Feminino</span>
<span class="t" style="top:622.01px;font-size:15px;left:1007.41px;letter-spacing:0.838px;color:#1a1a1a;">06/01/2021</span>
<span class="t" style="top:622.01px;font-size:15px;left:1183.43px;letter-spacing:0.130px;color:#1a1a1a;">3 - 6 Anos</span>
<span class="t" style="top:622.01px;font-size:15px;left:1390.07px;letter-spacing:-1.200px;color:#1a1a1a;">R$</span>
<span class="t" style="top:622.01px;font-size:15px;right:393.18px;letter-spacing:0.637px;color:#1a1a1a;">6.000,00</span>
<span class="t" style="top:622.01px;font-size:15px;left:1549.07px;letter-spacing:0.152px;color:#1a1a1a;">Detalhes 6</span>
<span class="t" style="top:613.01px;font-size:15px;left:1664.26px;letter-spacing:0.313px;color:#0563c1;text-decoration:underline;text-underline-offset:1.5px;text-decoration-thickness:1px;text-decoration-skip-ink:none;">https://pa</span>
<span class="t" style="top:633.51px;font-size:15px;left:1664.66px;letter-spacing:-0.303px;color:#0563c1;text-decoration:underline;text-underline-offset:1.5px;text-decoration-thickness:1px;text-decoration-skip-ink:none;">cotedepla</span>
<span class="t" style="top:662.01px;font-size:15px;left:61.02px;letter-spacing:-0.070px;color:#1a1a1a;">Sabrina</span>
<span class="t" style="top:662.01px;font-size:15px;left:478.87px;letter-spacing:0.277px;color:#1a1a1a;">Produção</span>
<span class="t" style="top:662.01px;font-size:15px;left:685.29px;letter-spacing:0.412px;color:#1a1a1a;">Operador</span>
<span class="t" style="top:662.01px;font-size:15px;left:895.17px;letter-spacing:0.451px;color:#1a1a1a;">Feminino</span>
<span class="t" style="top:662.01px;font-size:15px;left:1007.41px;letter-spacing:0.985px;color:#1a1a1a;">07/01/2022</span>
<span class="t" style="top:662.01px;font-size:15px;left:1183.41px;letter-spacing:0.131px;color:#1a1a1a;">0 - 3 Anos</span>
<span class="t" style="top:662.01px;font-size:15px;left:1390.07px;letter-spacing:-1.200px;color:#1a1a1a;">R$</span>
<span class="t" style="top:662.01px;font-size:15px;right:393.22px;letter-spacing:0.591px;color:#1a1a1a;">1.800,00</span>
<span class="t" style="top:662.01px;font-size:15px;left:1549.07px;letter-spacing:0.163px;color:#1a1a1a;">Detalhes 7</span>
<span class="t" style="top:653.01px;font-size:15px;left:1664.26px;letter-spacing:0.313px;color:#0563c1;text-decoration:underline;text-underline-offset:1.5px;text-decoration-thickness:1px;text-decoration-skip-ink:none;">https://pa</span>
<span class="t" style="top:673.51px;font-size:15px;left:1664.66px;letter-spacing:-0.303px;color:#0563c1;text-decoration:underline;text-underline-offset:1.5px;text-decoration-thickness:1px;text-decoration-skip-ink:none;">cotedepla</span>
<span class="t" style="top:702.01px;font-size:15px;left:61.07px;letter-spacing:0.298px;color:#1a1a1a;">Roberto</span>
<span class="t" style="top:702.01px;font-size:15px;left:478.87px;letter-spacing:0.400px;color:#1a1a1a;">Manutenção</span>
<span class="t" style="top:702.01px;font-size:15px;left:685.47px;letter-spacing:-0.020px;color:#1a1a1a;">Eletricista</span>
<span class="t" style="top:702.01px;font-size:15px;left:895.17px;letter-spacing:0.416px;color:#1a1a1a;">Masculino</span>
<span class="t" style="top:702.01px;font-size:15px;left:1007.41px;letter-spacing:0.966px;color:#1a1a1a;">08/01/2020</span>
<span class="t" style="top:702.01px;font-size:15px;left:1183.43px;letter-spacing:0.130px;color:#1a1a1a;">3 - 6 Anos</span>
<span class="t" style="top:702.01px;font-size:15px;left:1390.07px;letter-spacing:-1.200px;color:#1a1a1a;">R$</span>
<span class="t" style="top:702.01px;font-size:15px;right:393.20px;letter-spacing:0.610px;color:#1a1a1a;">3.000,00</span>
<span class="t" style="top:702.01px;font-size:15px;left:1549.07px;letter-spacing:0.152px;color:#1a1a1a;">Detalhes 8</span>
<span class="t" style="top:693.01px;font-size:15px;left:1664.26px;letter-spacing:0.313px;color:#0563c1;text-decoration:underline;text-underline-offset:1.5px;text-decoration-thickness:1px;text-decoration-skip-ink:none;">https://pa</span>
<span class="t" style="top:713.51px;font-size:15px;left:1664.66px;letter-spacing:-0.303px;color:#0563c1;text-decoration:underline;text-underline-offset:1.5px;text-decoration-thickness:1px;text-decoration-skip-ink:none;">cotedepla</span>
<span class="t" style="top:742.01px;font-size:15px;left:61.07px;letter-spacing:0.029px;color:#1a1a1a;">Ricardo</span>
<span class="t" style="top:742.01px;font-size:15px;left:479.34px;letter-spacing:0.194px;color:#1a1a1a;">Comercial</span>
<span class="t" style="top:742.01px;font-size:15px;left:685.24px;letter-spacing:0.447px;color:#1a1a1a;">Comprador</span>
<span class="t" style="top:742.01px;font-size:15px;left:895.17px;letter-spacing:0.416px;color:#1a1a1a;">Masculino</span>
<span class="t" style="top:742.01px;font-size:15px;left:1007.41px;letter-spacing:0.974px;color:#1a1a1a;">01/01/2016</span>
<span class="t" style="top:742.01px;font-size:15px;left:1183.97px;letter-spacing:0.042px;color:#1a1a1a;">Acima de 6 Anos</span>
<span class="t" style="top:742.01px;font-size:15px;left:1390.07px;letter-spacing:-1.200px;color:#1a1a1a;">R$</span>
<span class="t" style="top:742.01px;font-size:15px;right:393.24px;letter-spacing:0.577px;color:#1a1a1a;">4.000,00</span>
<span class="t" style="top:742.01px;font-size:15px;left:1549.07px;letter-spacing:0.158px;color:#1a1a1a;">Detalhes 9</span>
<span class="t" style="top:733.01px;font-size:15px;left:1664.26px;letter-spacing:0.313px;color:#0563c1;text-decoration:underline;text-underline-offset:1.5px;text-decoration-thickness:1px;text-decoration-skip-ink:none;">https://pa</span>
<span class="t" style="top:753.51px;font-size:15px;left:1664.66px;letter-spacing:-0.303px;color:#0563c1;text-decoration:underline;text-underline-offset:1.5px;text-decoration-thickness:1px;text-decoration-skip-ink:none;">cotedepla</span>
<span class="t" style="top:782.01px;font-size:15px;left:60.67px;letter-spacing:-0.255px;color:#1a1a1a;">Júlio Cesar</span>
<span class="t" style="top:782.01px;font-size:15px;left:478.87px;letter-spacing:0.277px;color:#1a1a1a;">Produção</span>
<span class="t" style="top:782.01px;font-size:15px;left:685.32px;letter-spacing:0.203px;color:#1a1a1a;">Supervisor</span>
<span class="t" style="top:782.01px;font-size:15px;left:895.17px;letter-spacing:0.416px;color:#1a1a1a;">Masculino</span>
<span class="t" style="top:782.01px;font-size:15px;left:1006.86px;letter-spacing:1.047px;color:#1a1a1a;">10/01/2022</span>
<span class="t" style="top:782.01px;font-size:15px;left:1183.41px;letter-spacing:0.131px;color:#1a1a1a;">0 - 3 Anos</span>
<span class="t" style="top:782.01px;font-size:15px;left:1390.07px;letter-spacing:-1.200px;color:#1a1a1a;">R$</span>
<span class="t" style="top:782.01px;font-size:15px;right:393.20px;letter-spacing:0.614px;color:#1a1a1a;">5.000,00</span>
<span class="t" style="top:782.01px;font-size:15px;left:1549.07px;letter-spacing:0.235px;color:#1a1a1a;">Detalhes 10</span>
<span class="t" style="top:773.01px;font-size:15px;left:1664.26px;letter-spacing:0.313px;color:#0563c1;text-decoration:underline;text-underline-offset:1.5px;text-decoration-thickness:1px;text-decoration-skip-ink:none;">https://pa</span>
<span class="t" style="top:793.51px;font-size:15px;left:1664.66px;letter-spacing:-0.303px;color:#0563c1;text-decoration:underline;text-underline-offset:1.5px;text-decoration-thickness:1px;text-decoration-skip-ink:none;">cotedepla</span>
<div class="a" style="left:1532px;top:411px;width:119px;height:43px;border:2px solid #1e6f42;"></div>
<div class="a" style="left:1646px;top:449px;width:7px;height:7px;background:#1e6f42;border:1px solid #fff;"></div>
<svg class="a" style="left:1730.8px;top:805.8px;" width="7" height="7" viewBox="0 0 7 7"><path d="M6.4 0 V6.3 H0 V3 H3 V0 Z" fill="#3f51b0"/></svg>
<div class="a" style="left:0px;top:953px;width:1920px;height:40px;background:#fff;"></div>
<div class="a" style="left:0;top:953px;width:141px;height:40px;border-radius:0 7px 0 0;background:#e3ebe7;"></div>
<div class="a" style="left:241px;top:953px;width:1679px;height:40px;border-radius:7px 0 0 0;background:linear-gradient(90deg,#e8e8e8 0%,#e8e8e8 40%,#e8ebee 85%,#e6eaea 100%);"></div>
<div class="a" style="left:0px;top:980px;width:1920px;height:13px;background:linear-gradient(90deg,#e3ebe7 0,#e3ebe7 141px,#e5eae7 141px,#e8e8e8 241px,#e8e8e8 40%,#e8ebee 85%,#e6eaea 100%);"></div>
<svg class="a" style="left:31px;top:964px;" width="10" height="15" viewBox="0 0 10 15"><path d="M8 1 L1.5 7.5 L8 14" fill="none" stroke="#b5b5b5" stroke-width="1.4" stroke-linecap="round" stroke-linejoin="round"/></svg>
<svg class="a" style="left:72px;top:964px;" width="10" height="15" viewBox="0 0 10 15"><path d="M2 1 L8.5 7.5 L2 14" fill="none" stroke="#b5b5b5" stroke-width="1.4" stroke-linecap="round" stroke-linejoin="round"/></svg>
<div class="a" style="left:141px;top:953px;width:100px;height:35px;border-radius:0 0 7px 7px;background:#fff;box-shadow:0 1px 2px rgba(0,0,0,.10);"></div>
<span class="t" style="top:960.30px;font-size:17px;left:151.00px;letter-spacing:-0.306px;color:#1a1a1a;font-weight:bold;">Cadastros</span>
<div class="a" style="left:151px;top:982.5px;width:80px;height:2.5px;border-radius:1px;background:#107c41;"></div>
<div class="a" style="left:246px;top:962px;width:1px;height:22px;background:#cfcfcf;"></div>
<div class="a" style="left:356px;top:962px;width:1px;height:22px;background:#cfcfcf;"></div>
<div class="a" style="left:553px;top:962px;width:1px;height:22px;background:#cfcfcf;"></div>
<span class="t" style="top:965.00px;font-size:17px;left:265.67px;letter-spacing:-0.082px;color:#333;">Avaliação</span>
<span class="t" style="top:965.00px;font-size:17px;left:378.31px;letter-spacing:0.100px;color:#333;">Definições Nine Box</span>
<svg class="a" style="left:606px;top:965px;" width="15" height="15" viewBox="0 0 15 15"><path d="M7.5 0.5 V14.5 M0.5 7.5 H14.5" stroke="#333" stroke-width="1.4" fill="none"/></svg>
<div class="a" style="left:1387px;top:967px;width:3px;height:3px;background:#333;"></div>
<div class="a" style="left:1387px;top:972px;width:3px;height:3px;background:#333;"></div>
<div class="a" style="left:1387px;top:977px;width:3px;height:3px;background:#333;"></div>
<div class="a" style="left:1409px;top:962px;width:485px;height:21px;border-radius:10.5px;background:#f5f6f6;"></div>
<svg class="a" style="left:1415px;top:966.5px;" width="9" height="13" viewBox="0 0 9 13"><path d="M1.5 6.5 L7.4 1.8 V11.2 Z" fill="#6b6b6b" stroke="#6b6b6b" stroke-width="1.7" stroke-linejoin="round"/></svg>
<svg class="a" style="left:1879px;top:966.5px;" width="9" height="13" viewBox="0 0 9 13"><path d="M7.5 6.5 L1.6 1.8 V11.2 Z" fill="#6b6b6b" stroke="#6b6b6b" stroke-width="1.7" stroke-linejoin="round"/></svg>
<div class="a" style="left:1430px;top:966.5px;width:390px;height:12px;border-radius:6px;background:#717171;"></div>
<div class="a" style="left:0px;top:993px;width:1920px;height:26px;background:#f3f3f3;"></div>
<div class="a" style="left:0px;top:993px;width:1920px;height:1px;background:#fcfcfc;"></div>
<span class="t" style="top:997.71px;font-size:13px;left:13.53px;letter-spacing:0.160px;color:#333;">Pronto</span>
<svg class="a" style="left:78px;top:999px;" width="20" height="17" viewBox="0 0 20 17"><path d="M0.8 15 V0.9 H17.6 M0.8 4 H17.6 M0.8 15 H6.8 M3.3 8 H7.2 M3.3 11.2 H6.2" fill="none" stroke="#3b3b3b" stroke-width="1.5"/><circle cx="12.4" cy="10.7" r="5" fill="#f3f3f3" stroke="#3b3b3b" stroke-width="1.4"/><circle cx="12.4" cy="10.7" r="2.3" fill="#3b3b3b"/></svg>
<svg class="a" style="left:118px;top:998px;" width="19" height="19" viewBox="0 0 19 19"><path d="M1.4 5.4 L8.4 8.3 L15.2 5.4 M8.4 8 V12 M8.4 11.6 L3.8 16.6 M8.4 11.6 L10.6 14" fill="none" stroke="#333" stroke-width="3.5" stroke-linecap="round" stroke-linejoin="round"/><path d="M1.4 5.4 L8.4 8.3 L15.2 5.4 M8.4 8 V12 M8.4 11.6 L3.8 16.6 M8.4 11.6 L10.6 14" fill="none" stroke="#f3f3f3" stroke-width="1.5" stroke-linecap="round" stroke-linejoin="round"/><circle cx="8.4" cy="3.3" r="2.3" fill="#f3f3f3" stroke="#333" stroke-width="1.1"/><path d="M10.6 12.6 L17.3 17.6 M17.3 12.6 L10.6 17.6" stroke="#f3f3f3" stroke-width="2.6"/><path d="M10.6 12.6 L17.3 17.6 M17.3 12.6 L10.6 17.6" stroke="#333" stroke-width="1.35" stroke-linecap="round"/></svg>
<span class="t" style="top:997.71px;font-size:13px;left:140.38px;letter-spacing:-0.155px;color:#262626;font-weight:bold;">Acessibilidade: investigar</span>
<svg class="a" style="left:1383px;top:999px;" width="19" height="18" viewBox="0 0 19 18"><path d="M8 11.5 H1.2 V1 H15.5 V6.5" fill="none" stroke="#333" stroke-width="1.3"/><path d="M4.5 14.5 H8.5 M6.5 11.5 V14.5" stroke="#333" stroke-width="1.2"/><circle cx="13" cy="12.5" r="3" fill="none" stroke="#333" stroke-width="1.6"/><path d="M13 7.8 V9.5 M13 15.5 V17.2 M8.3 12.5 H10 M16 12.5 H17.7 M9.7 9.2 L10.9 10.4 M15.1 14.6 L16.3 15.8 M16.3 9.2 L15.1 10.4 M10.9 14.6 L9.7 15.8" stroke="#333" stroke-width="1.4"/></svg>
<span class="t" style="top:997.71px;font-size:13px;left:1403.63px;letter-spacing:-0.006px;color:#333;">Exibir Configurações</span>
<div class="a" style="left:1548px;top:993px;width:50px;height:26px;background:#dcdcdc;"></div>
<svg class="a" style="left:1564px;top:998px;" width="18" height="18" viewBox="0 0 18 18"><rect x="0.8" y="0.8" width="15.4" height="15.4" fill="none" stroke="#333" stroke-width="1.5"/><path d="M0.8 6 H16.2 M0.8 11 H16.2 M6 0.8 V16.2 M11 0.8 V16.2" stroke="#333" stroke-width="1.3"/></svg>
<svg class="a" style="left:1614px;top:998px;" width="18" height="18" viewBox="0 0 18 18"><rect x="1" y="1" width="16" height="14.6" rx="0.8" fill="#fff" stroke="#444" stroke-width="1.7"/><rect x="5" y="4.1" width="8.2" height="8.6" fill="#c9c9c9" stroke="#1f1f1f" stroke-width="1.5"/><path d="M6.8 6.3 H11.4 M6.8 8.6 H11.4 M6.8 10.7 H11.4" stroke="#444" stroke-width="0.9"/></svg>
<svg class="a" style="left:1664px;top:998px;" width="18" height="18" viewBox="0 0 18 18"><rect x="1" y="1" width="16" height="14.6" rx="0.8" fill="#fff" stroke="#444" stroke-width="1.7"/><path d="M1 9.4 H11.2 V1 M5.9 1 V9.4" stroke="#444" stroke-width="1.6" fill="none"/></svg>
<div class="a" style="left:1705px;top:1006.5px;width:9px;height:1.2px;background:#333;"></div>
<div class="a" style="left:1722px;top:1006.5px;width:124px;height:1px;background:#666;"></div>
<div class="a" style="left:1783px;top:1003px;width:1px;height:8px;background:#666;"></div>
<div class="a" style="left:1768px;top:1000px;width:6px;height:13px;border-radius:1px;background:#5a5a5a;"></div>
<svg class="a" style="left:1852px;top:1002px;" width="10" height="10" viewBox="0 0 10 10"><path d="M5 0 V10 M0 5 H10" stroke="#333" stroke-width="1.2"/></svg>
<span class="t" style="top:997.71px;font-size:13px;left:1878.14px;letter-spacing:-1.101px;color:#333;">80%</span>
<svg class="a" style="left:46px;top:107px;" width="36" height="40" viewBox="0 0 36 40"><rect x="2.2" y="7.2" width="24.5" height="28.5" fill="#fafafa" stroke="#e9811a" stroke-width="2"/>
<rect x="4" y="9" width="20.9" height="24.9" fill="none" stroke="#fbdc9c" stroke-width="1.6"/>
<path d="M6.8 11 V5.9 H10.5 C10.5 0.2 19 0.2 19 5.9 H22.2 V11 Z" fill="#fafafa" stroke="#7d7d7d" stroke-width="1.5" stroke-linejoin="round"/>
<rect x="18.1" y="17.1" width="16.3" height="21" fill="#fafafa" stroke="#555" stroke-width="1.5"/></svg>
<span class="t" style="top:150.81px;font-size:15px;left:42.94px;letter-spacing:-0.137px;color:#242424;">Colar</span>
<svg class="a" style="left:55.3px;top:175.7px;" width="10" height="7" viewBox="0 0 10 7"><path d="M2 2 L5.0 5.2 L8 2" fill="none" stroke="#333" stroke-width="1.3" stroke-linecap="round" stroke-linejoin="round"/></svg>
<svg class="a" style="left:96px;top:107px;" width="16" height="21" viewBox="0 0 16 21"><path d="M4.3 0.8 L11 15 M11.8 0.8 L5 15" stroke="#444" stroke-width="1.2" fill="none" stroke-linecap="round"/>
<circle cx="4.3" cy="17.5" r="2.1" fill="none" stroke="#2b88d8" stroke-width="1.4"/><circle cx="11.8" cy="17.5" r="2.1" fill="none" stroke="#2b88d8" stroke-width="1.3"/></svg>
<svg class="a" style="left:94px;top:139px;" width="22" height="21" viewBox="0 0 22 21"><path d="M8 17.3 H0.8 V0.8 H6.5 Q9 0.8 9.3 3.5" fill="#fafafa" stroke="#444" stroke-width="1.3"/>
<path d="M8 4.5 H14.5 L19.5 9.5 V19.5 H8 Z" fill="#fafafa" stroke="#444" stroke-width="1.3" stroke-linejoin="round"/>
<path d="M14.5 4.5 V9.5 H19.5 M11 12.7 H16.8 M11 15.2 H16.8" fill="none" stroke="#444" stroke-width="1"/></svg>
<svg class="a" style="left:128.25px;top:145.85px;" width="10" height="7" viewBox="0 0 10 7"><path d="M2 2 L5.25 5.3 L8.5 2" fill="none" stroke="#333" stroke-width="1.3" stroke-linecap="round" stroke-linejoin="round"/></svg>
<svg class="a" style="left:94px;top:170px;" width="22" height="21" viewBox="0 0 22 21"><path d="M11 8 L15 4 C16 3 18 1.8 19 2.8 C20 3.8 19 5.8 18 6.8 L14 10.5" fill="#fff" stroke="#444" stroke-width="1.2" stroke-linejoin="round"/>
<path d="M9.5 6.5 L15.5 12.5 L13.5 14.5 L7.5 8.5 Z" fill="#fff" stroke="#444" stroke-width="1.2" stroke-linejoin="round"/>
<path d="M7 9 L13 15 L7.5 19 L1 12.5 Z" fill="#fbd5b0" stroke="#e8822a" stroke-width="1.5" stroke-linejoin="round"/>
<path d="M4.5 12.5 L9 17" stroke="#e8822a" stroke-width="1.2"/></svg>
<div class="a" style="left:180px;top:112px;width:144px;height:30px;border:1px solid #8a8a8a;border-radius:5px;background:#fff;"></div>
<span class="t" style="top:118.01px;font-size:15px;left:183.09px;letter-spacing:-0.576px;color:#242424;">Open Sans</span>
<svg class="a" style="left:311.25px;top:123.85px;" width="10" height="7" viewBox="0 0 10 7"><path d="M2 2 L5.25 5.3 L8.5 2" fill="none" stroke="#333" stroke-width="1.3" stroke-linecap="round" stroke-linejoin="round"/></svg>
<div class="a" style="left:326px;top:112px;width:62px;height:30px;border:1px solid #8a8a8a;border-radius:5px;background:#fff;"></div>
<span class="t" style="top:118.01px;font-size:15px;left:330.56px;letter-spacing:-1.200px;color:#242424;">11</span>
<svg class="a" style="left:375.25px;top:123.85px;" width="10" height="7" viewBox="0 0 10 7"><path d="M2 2 L5.25 5.3 L8.5 2" fill="none" stroke="#333" stroke-width="1.3" stroke-linecap="round" stroke-linejoin="round"/></svg>
<span class="t" style="top:116.01px;font-size:19.5px;left:397.66px;color:#333;">A</span>
<svg class="a" style="left:409px;top:117px;" width="8" height="5" viewBox="0 0 8 5"><path d="M1 4 L3.8 1.2 L6.6 4" fill="none" stroke="#2b88d8" stroke-width="1.4" stroke-linecap="round" stroke-linejoin="round"/></svg>
<span class="t" style="top:118.00px;font-size:16px;left:431.17px;color:#333;">A</span>
<svg class="a" style="left:440px;top:118px;" width="8" height="5" viewBox="0 0 8 5"><path d="M1 1 L3.8 3.8 L6.6 1" fill="none" stroke="#2b88d8" stroke-width="1.4" stroke-linecap="round" stroke-linejoin="round"/></svg>
<span class="t" style="top:156.71px;font-size:17px;left:187.46px;color:#333;font-weight:bold;-webkit-text-stroke:0.3px #333;">N</span>
<span class="t" style="top:155.71px;font-size:19px;left:223.27px;color:#3a3a3a;font-style:italic;font-family:'Liberation Serif', serif;">I</span>
<span class="t" style="top:155.80px;font-size:16.5px;left:254.25px;color:#444;transform:scaleX(0.86);transform-origin:left;">S</span>
<div class="a" style="left:254px;top:173.5px;width:10px;height:1.3px;background:#333;"></div>
<svg class="a" style="left:277.25px;top:163.85px;" width="10" height="7" viewBox="0 0 10 7"><path d="M2 2 L5.25 5.3 L8.5 2" fill="none" stroke="#333" stroke-width="1.3" stroke-linecap="round" stroke-linejoin="round"/></svg>
<div class="a" style="left:295px;top:152px;width:1px;height:29.5px;background:#d1d1d1;"></div>
<svg class="a" style="left:303px;top:157px;" width="20" height="19" viewBox="0 0 20 19"><rect x="0.8" y="0.8" width="17.6" height="17.4" fill="#fafafa" stroke="#1a1a1a" stroke-width="1.5"/><path d="M9.6 0.8 V18.2 M0.8 9.5 H18.4" stroke="#1a1a1a" stroke-width="1.4"/></svg>
<svg class="a" style="left:331.25px;top:163.85px;" width="10" height="7" viewBox="0 0 10 7"><path d="M2 2 L5.25 5.3 L8.5 2" fill="none" stroke="#333" stroke-width="1.3" stroke-linecap="round" stroke-linejoin="round"/></svg>
<div class="a" style="left:349px;top:152px;width:1px;height:29.5px;background:#d1d1d1;"></div>
<svg class="a" style="left:357px;top:156px;" width="21" height="22" viewBox="0 0 21 22"><path d="M14.3 5.2 C17.3 5 18.3 8.5 17.9 13.6 C17 10.8 16.4 9.4 14.6 8.2 Z" fill="#1e7fd0"/>
<path d="M3.2 9.1 L10.2 1.9 L16.3 7.8 L8.4 14.9 Z" fill="#fff" stroke="#333" stroke-width="1.2" stroke-linejoin="round"/>
<path d="M9.6 6.2 C8.6 2.2 9.8 0.7 11 1.4 C12.2 2.1 12.6 3.6 12.8 5" fill="none" stroke="#333" stroke-width="1.1"/>
<rect x="0" y="16.2" width="20" height="4.8" fill="#203864"/></svg>
<svg class="a" style="left:385.25px;top:163.85px;" width="10" height="7" viewBox="0 0 10 7"><path d="M2 2 L5.25 5.3 L8.5 2" fill="none" stroke="#333" stroke-width="1.3" stroke-linecap="round" stroke-linejoin="round"/></svg>
<span class="t" style="top:154.30px;font-size:17.5px;left:412.17px;color:#3a3a3a;">A</span>
<div class="a" style="left:408px;top:172.2px;width:20px;height:4.8px;background:#000;"></div>
<svg class="a" style="left:436.25px;top:163.85px;" width="10" height="7" viewBox="0 0 10 7"><path d="M2 2 L5.25 5.3 L8.5 2" fill="none" stroke="#333" stroke-width="1.3" stroke-linecap="round" stroke-linejoin="round"/></svg>
<div class="a" style="left:504px;top:112px;width:30px;height:30px;border:1px solid #8a8a8a;border-radius:5px;background:#ebebeb;"></div>
<svg class="a" style="left:0px;top:0px;" width="700" height="200" viewBox="0 0 700 200"><path d="M478 117.5 H496 M481 122.5 H493 M478 127.5 H496 M510 121.5 H528 M513 126.5 H525 M510 131.5 H528 M542 126.5 H560 M545 131.5 H557 M542 136.5 H560" stroke="#3b3b3b" stroke-width="1.15" fill="none"/></svg>
<svg class="a" style="left:571px;top:114px;" width="25" height="24" viewBox="0 0 25 24"><text x="0" y="0" font-size="13" font-family="'Liberation Sans',sans-serif" fill="#3b3b3b" transform="translate(6 17.6) rotate(-45)">ab</text>
<path d="M8.6 21.3 L21.6 8.6 M16.6 8.3 H22 V13.6" fill="none" stroke="#2b88d8" stroke-width="1.3" stroke-linecap="round" stroke-linejoin="round"/></svg>
<svg class="a" style="left:599.25px;top:123.85px;" width="10" height="7" viewBox="0 0 10 7"><path d="M2 2 L5.25 5.3 L8.5 2" fill="none" stroke="#333" stroke-width="1.3" stroke-linecap="round" stroke-linejoin="round"/></svg>
<div class="a" style="left:637px;top:111px;width:1px;height:78px;background:#d1d1d1;"></div>
<div class="a" style="left:645px;top:112px;width:30px;height:30px;border:1px solid #8a8a8a;border-radius:5px;background:#ebebeb;"></div>
<span class="t" style="top:112.01px;font-size:12px;left:652.49px;letter-spacing:0.900px;color:#444;">ab</span>
<span class="t" style="top:121.60px;font-size:12px;left:652.49px;color:#444;">c</span>
<svg class="a" style="left:658px;top:127px;" width="14" height="11" viewBox="0 0 14 11"><path d="M11.5 0.8 V4 Q11.5 6.8 8.5 6.8 H2 M5 3.8 L1.8 6.8 L5 9.8" fill="none" stroke="#2b88d8" stroke-width="1.4" stroke-linecap="round" stroke-linejoin="round"/></svg>
<div class="a" style="left:472px;top:152px;width:30px;height:30px;border:1px solid #8a8a8a;border-radius:5px;background:#ebebeb;"></div>
<svg class="a" style="left:0px;top:0px;" width="700" height="200" viewBox="0 0 700 200"><path d="M478 159 H496 M478 164 H490.8 M478 169 H496 M478 174 H490.8 M510 159 H528 M513 164 H525 M510 169 H528 M513 174 H525 M542 159 H560 M547.3 164 H560 M542 169 H560 M547.3 174 H560 M574 159 H592 M574 174 H592 M584.2 164 H592 M584.2 169 H592 M606 159 H624 M606 174 H624 M616.3 164 H624 M616.3 169 H624" stroke="#555" stroke-width="1.5" fill="none"/></svg>
<svg class="a" style="left:573px;top:162px;" width="10" height="10" viewBox="0 0 10 10"><path d="M8.7 4.5 H1.6 M4.1 1.9 L1.5 4.5 L4.1 7.1" fill="none" stroke="#2b88d8" stroke-width="1.5" stroke-linecap="round" stroke-linejoin="round"/></svg>
<svg class="a" style="left:605px;top:162px;" width="10" height="10" viewBox="0 0 10 10"><path d="M1.2 4.5 H8.3 M5.8 1.9 L8.4 4.5 L5.8 7.1" fill="none" stroke="#2b88d8" stroke-width="1.5" stroke-linecap="round" stroke-linejoin="round"/></svg>
<svg class="a" style="left:650px;top:157px;" width="20" height="19" viewBox="0 0 20 19"><rect x="1" y="1" width="17.4" height="17" fill="#ececec" stroke="#b4b4b4" stroke-width="1.6"/>
<path d="M1 4.6 H18.4 M1 14.4 H18.4 M9.7 1 V4.6 M9.7 14.4 V18" stroke="#b4b4b4" stroke-width="1.5" fill="none"/>
<path d="M3.6 9.5 H15.8 M6 7 L3.4 9.5 L6 12 M13.4 7 L16 9.5 L13.4 12" stroke="#b4b4b4" stroke-width="1.2" fill="none"/></svg>
<svg class="a" style="left:684.25px;top:163.85px;" width="10" height="7" viewBox="0 0 10 7"><path d="M2 2 L5.25 5.3 L8.5 2" fill="none" stroke="#c2c2c2" stroke-width="1.3" stroke-linecap="round" stroke-linejoin="round"/></svg>
<div class="a" style="left:725px;top:112px;width:180px;height:30px;border:1px solid #8a8a8a;border-radius:5px;background:#fff;"></div>
<span class="t" style="top:118.01px;font-size:15px;left:728.25px;letter-spacing:-0.407px;color:#242424;">Geral</span>
<svg class="a" style="left:892.05px;top:123.85px;" width="10" height="7" viewBox="0 0 10 7"><path d="M2 2 L5.25 5.3 L8.5 2" fill="none" stroke="#333" stroke-width="1.3" stroke-linecap="round" stroke-linejoin="round"/></svg>
<svg class="a" style="left:730px;top:160.5px;" width="23" height="18" viewBox="0 0 23 18"><rect x="0.7" y="0.7" width="19" height="11.5" fill="#fff" stroke="#444" stroke-width="1.3"/>
<path d="M7 4 C4 3.5 3.5 8.5 7 8.3 M13 4 C10 3.5 9.5 8.5 13 8.3 M15.5 4.5 L17 4 V8.5" fill="none" stroke="#444" stroke-width="1.1"/>
<path d="M10.5 8.5 C10.5 6.3 19.5 6.3 19.5 8.5 V14.5 C19.5 16.8 10.5 16.8 10.5 14.5 Z" fill="#fff" stroke="#e8711a" stroke-width="1.4"/>
<path d="M10.5 8.5 C10.5 10.7 19.5 10.7 19.5 8.5 M10.5 11.5 C10.5 13.7 19.5 13.7 19.5 11.5" fill="none" stroke="#e8711a" stroke-width="1.3"/></svg>
<svg class="a" style="left:758.25px;top:163.85px;" width="10" height="7" viewBox="0 0 10 7"><path d="M2 2 L5.25 5.3 L8.5 2" fill="none" stroke="#333" stroke-width="1.3" stroke-linecap="round" stroke-linejoin="round"/></svg>
<span class="t" style="top:157.60px;font-size:24.5px;left:781.13px;color:#3a3a3a;transform:scaleX(0.86);transform-origin:left;">%</span>
<span class="t" style="top:157.01px;font-size:12px;left:812.73px;letter-spacing:0.103px;color:#555;">000</span>
<div class="a" style="left:840px;top:152px;width:1px;height:29.5px;background:#d1d1d1;"></div>
<svg class="a" style="left:847.5px;top:158px;" width="12" height="9" viewBox="0 0 12 9"><path d="M11 4.5 H1.5 M5 1 L1.5 4.5 L5 8" fill="none" stroke="#2b88d8" stroke-width="1.4" stroke-linecap="round" stroke-linejoin="round"/></svg>
<span class="t" style="top:151.50px;font-size:11px;left:859.01px;color:#444;">,0</span>
<span class="t" style="top:162.00px;font-size:11px;left:852.71px;color:#444;">,00</span>
<span class="t" style="top:151.50px;font-size:11px;left:884.71px;color:#444;">,00</span>
<svg class="a" style="left:880px;top:167px;" width="12" height="9" viewBox="0 0 12 9"><path d="M1 4.5 H10.5 M7 1 L10.5 4.5 L7 8" fill="none" stroke="#2b88d8" stroke-width="1.4" stroke-linecap="round" stroke-linejoin="round"/></svg>
<span class="t" style="top:162.00px;font-size:11px;left:890.71px;color:#444;">,0</span>
<svg class="a" style="left:956px;top:112px;" width="37" height="29" viewBox="0 0 37 29"><rect x="0.9" y="0.9" width="34.2" height="26.4" fill="#f6f6f6" stroke="#666" stroke-width="1.6"/>
<path d="M0.9 9.5 H35.1 M0.9 18.3 H35.1 M6.6 0.9 V27.3 M28.8 0.9 V27.3" stroke="#6e6e6e" stroke-width="1.1" fill="none"/>
<rect x="7" y="0.9" width="15.6" height="8.9" fill="#fb9198" stroke="#dc2c25" stroke-width="1.3"/>
<rect x="7" y="9.8" width="10.4" height="8" fill="#7db8ec" stroke="#1f6fc9" stroke-width="1.3"/>
<rect x="7" y="17.8" width="18.4" height="9.5" fill="#fb9198" stroke="#dc2c25" stroke-width="1.3"/></svg>
<span class="t" style="top:148.81px;font-size:15px;left:933.77px;letter-spacing:-0.021px;color:#242424;">Formatação</span>
<span class="t" style="top:168.81px;font-size:15px;left:927.04px;letter-spacing:0.157px;color:#242424;">Condicional</span>
<svg class="a" style="left:1009.5px;top:173.9px;" width="10" height="7" viewBox="0 0 10 7"><path d="M2 2 L5.0 5.2 L8 2" fill="none" stroke="#333" stroke-width="1.3" stroke-linecap="round" stroke-linejoin="round"/></svg>
<svg class="a" style="left:1060px;top:112px;" width="40" height="36" viewBox="0 0 40 36"><rect x="0.9" y="0.9" width="34.2" height="26.4" fill="#f6f6f6" stroke="#666" stroke-width="1.6"/>
<rect x="12" y="9.2" width="23.1" height="18.1" fill="#7db8ec"/>
<path d="M0.9 9.2 H12 M0.9 18.3 H12 M12 0.9 V9.2 M23.5 0.9 V9.2" stroke="#6e6e6e" stroke-width="1.1" fill="none"/>
<path d="M12 18.3 H35.1 M23.5 9.2 V27.3" stroke="#3a86d6" stroke-width="1.1" fill="none"/>
<path d="M35.1 9.2 H12 V27.3 M12 27.3 H35.1 V9.2" fill="none" stroke="#2b7cd3" stroke-width="1.3"/>
<path d="M9.8 33.2 c2.8 -0.2 4 -1.8 4.4 -4 c0.5 -3 4.2 -4 6.2 -1.8 c2.2 2.5 0.6 6.4 -3.4 7.3 c-2.8 0.6 -5.6 -0.1 -7.2 -1.5 z" fill="#6fb1e8" stroke="#2b7cd3" stroke-width="1.3" stroke-linejoin="round"/>
<path d="M17.6 25.6 L34 9.4 C36 7.4 38.8 9.7 37 12 L21.9 29.2" fill="#fff" stroke="#555" stroke-width="1.3" stroke-linejoin="round"/></svg>
<span class="t" style="top:148.81px;font-size:15px;left:1026.57px;letter-spacing:0.080px;color:#242424;">Formatar como</span>
<span class="t" style="top:168.81px;font-size:15px;left:1050.66px;letter-spacing:-0.453px;color:#242424;">Tabela</span>
<svg class="a" style="left:1096.3px;top:173.9px;" width="10" height="7" viewBox="0 0 10 7"><path d="M2 2 L5.0 5.2 L8 2" fill="none" stroke="#333" stroke-width="1.3" stroke-linecap="round" stroke-linejoin="round"/></svg>
<svg class="a" style="left:1150px;top:112px;" width="40" height="36" viewBox="0 0 40 36"><rect x="0.9" y="0.9" width="34.2" height="26.4" fill="#f6f6f6" stroke="#666" stroke-width="1.6"/>
<path d="M0.9 5.8 H35.1 M0.9 21.8 H35.1 M6.4 0.9 V27.3 M29 0.9 V27.3" stroke="#6e6e6e" stroke-width="1.1" fill="none"/>
<rect x="6.4" y="5.8" width="22.6" height="16" fill="#7db8ec" stroke="#2b7cd3" stroke-width="1.3"/>
<path d="M9.8 33.2 c2.8 -0.2 4 -1.8 4.4 -4 c0.5 -3 4.2 -4 6.2 -1.8 c2.2 2.5 0.6 6.4 -3.4 7.3 c-2.8 0.6 -5.6 -0.1 -7.2 -1.5 z" fill="#6fb1e8" stroke="#2b7cd3" stroke-width="1.3" stroke-linejoin="round"/>
<path d="M17.6 25.6 L34 9.4 C36 7.4 38.8 9.7 37 12 L21.9 29.2" fill="#fff" stroke="#555" stroke-width="1.3" stroke-linejoin="round"/></svg>
<span class="t" style="top:148.81px;font-size:15px;left:1135.77px;letter-spacing:-0.172px;color:#242424;">Estilos de</span>
<span class="t" style="top:168.81px;font-size:15px;left:1139.94px;letter-spacing:-0.394px;color:#242424;">Célula</span>
<svg class="a" style="left:1184.5px;top:173.9px;" width="10" height="7" viewBox="0 0 10 7"><path d="M2 2 L5.0 5.2 L8 2" fill="none" stroke="#333" stroke-width="1.3" stroke-linecap="round" stroke-linejoin="round"/></svg>
<svg class="a" style="left:1227px;top:108px;" width="21" height="19" viewBox="0 0 21 19"><path d="M0.8 4.9 V0.8 H19.5 V4.9 M0.8 13.2 V17.4 H19.5 V13.2" fill="#fafafa" stroke="#555" stroke-width="1.3"/>
<path d="M0.8 4.9 H19.5 M0.8 13.2 H19.5 M6.8 0.8 V4.9 M13.3 0.8 V4.9 M6.8 13.2 V17.4 M13.3 13.2 V17.4" stroke="#8a8a8a" stroke-width="0.9" fill="none"/>
<rect x="8.8" y="5.6" width="10.8" height="7" fill="#7db8ec" stroke="#1f6fc9" stroke-width="1.2"/>
<rect x="8.8" y="5.6" width="4.5" height="7" fill="#2f7fd3"/>
<path d="M9 9 H1 M4 5.9 L0.9 9 L4 12.1" fill="none" stroke="#2b88d8" stroke-width="1.3" stroke-linecap="round" stroke-linejoin="round"/></svg>
<span class="t" style="top:107.51px;font-size:15px;left:1251.22px;letter-spacing:-0.126px;color:#242424;">Inserir</span>
<svg class="a" style="left:1312.25px;top:113.85px;" width="10" height="7" viewBox="0 0 10 7"><path d="M2 2 L5.25 5.3 L8.5 2" fill="none" stroke="#333" stroke-width="1.3" stroke-linecap="round" stroke-linejoin="round"/></svg>
<svg class="a" style="left:1227px;top:140px;" width="21" height="19" viewBox="0 0 21 19"><path d="M0.8 4.8 V0.8 H19.5 V4.8 M0.8 13 V17.1 H19.5 V13" fill="#fafafa" stroke="#555" stroke-width="1.3"/>
<path d="M0.8 4.8 H19.5 M0.8 13 H19.5 M6.8 0.8 V4.8 M13.3 0.8 V4.8 M6.8 13 V17.1 M13.3 13 V17.1" stroke="#8a8a8a" stroke-width="0.9" fill="none"/>
<path d="M0.5 8.9 H4" stroke="#1f6fc9" stroke-width="1.4"/>
<rect x="4" y="6" width="6.3" height="6" fill="#7db8ec" stroke="#1f6fc9" stroke-width="1.5"/>
<path d="M13.4 6.2 L19 11.8 M19 6.2 L13.4 11.8" stroke="#e8333f" stroke-width="1.4" stroke-linecap="round"/></svg>
<span class="t" style="top:139.51px;font-size:15px;left:1251.37px;letter-spacing:-0.206px;color:#242424;">Excluir</span>
<svg class="a" style="left:1315.25px;top:145.85px;" width="10" height="7" viewBox="0 0 10 7"><path d="M2 2 L5.25 5.3 L8.5 2" fill="none" stroke="#333" stroke-width="1.3" stroke-linecap="round" stroke-linejoin="round"/></svg>
<svg class="a" style="left:1227px;top:171px;" width="21" height="20" viewBox="0 0 21 20"><path d="M3.8 1.5 H16.2 M3.8 0 V3 M16.2 0 V3" stroke="#2b88d8" stroke-width="1.2" fill="none"/>
<rect x="0.8" y="4.3" width="18.7" height="15" fill="#fafafa" stroke="#555" stroke-width="1.3"/>
<path d="M0.8 7.2 H19.5 M0.8 15.9 H19.5 M5.2 4.3 V19.3 M15.1 4.3 V19.3" stroke="#8a8a8a" stroke-width="0.9" fill="none"/>
<rect x="5.2" y="7.4" width="9.9" height="8.3" fill="#7db8ec" stroke="#1f6fc9" stroke-width="1.5"/></svg>
<span class="t" style="top:171.70px;font-size:15px;left:1251.37px;letter-spacing:0.019px;color:#242424;">Formatar</span>
<svg class="a" style="left:1315.25px;top:177.85px;" width="10" height="7" viewBox="0 0 10 7"><path d="M2 2 L5.25 5.3 L8.5 2" fill="none" stroke="#333" stroke-width="1.3" stroke-linecap="round" stroke-linejoin="round"/></svg>
<svg class="a" style="left:1364px;top:108px;" width="17" height="19" viewBox="0 0 17 19"><path d="M15 4 V1 H1.5 L9 9.3 L1.5 17.8 H15 V14.8" fill="none" stroke="#333" stroke-width="1.4" stroke-linejoin="round"/></svg>
<svg class="a" style="left:1396.25px;top:113.85px;" width="10" height="7" viewBox="0 0 10 7"><path d="M2 2 L5.25 5.3 L8.5 2" fill="none" stroke="#333" stroke-width="1.3" stroke-linecap="round" stroke-linejoin="round"/></svg>
<svg class="a" style="left:1362px;top:140px;" width="21" height="19" viewBox="0 0 21 19"><rect x="0.7" y="0.7" width="18.6" height="17" fill="#fff" stroke="#555" stroke-width="1.4"/><path d="M0.7 3.2 H19.3" stroke="#555" stroke-width="1.4"/>
<path d="M10 5.5 V14 M6.5 10.8 L10 14.3 L13.5 10.8" fill="none" stroke="#2b88d8" stroke-width="1.4" stroke-linecap="round" stroke-linejoin="round"/></svg>
<svg class="a" style="left:1388.25px;top:145.85px;" width="10" height="7" viewBox="0 0 10 7"><path d="M2 2 L5.25 5.3 L8.5 2" fill="none" stroke="#333" stroke-width="1.3" stroke-linecap="round" stroke-linejoin="round"/></svg>
<svg class="a" style="left:1362px;top:171px;" width="20" height="20" viewBox="0 0 20 20"><path d="M11.5 1.2 L18.5 8.2 L8.5 18.5 L1.5 11.5 Z" fill="#fff" stroke="#a245b8" stroke-width="1.5" stroke-linejoin="round"/>
<path d="M6.3 6.8 L13.3 13.8 L8.5 18.5 L1.5 11.5 Z" fill="#dba7e6" stroke="#a245b8" stroke-width="1.5" stroke-linejoin="round"/></svg>
<svg class="a" style="left:1388.25px;top:177.85px;" width="10" height="7" viewBox="0 0 10 7"><path d="M2 2 L5.25 5.3 L8.5 2" fill="none" stroke="#333" stroke-width="1.3" stroke-linecap="round" stroke-linejoin="round"/></svg>
<span class="t" style="top:107.81px;font-size:20.5px;left:1436.76px;color:#2b8fd9;transform:scaleX(0.9);transform-origin:left;">A</span>
<span class="t" style="top:125.20px;font-size:20.5px;left:1436.15px;color:#3a3a3a;transform:scaleX(0.9);transform-origin:left;">Z</span>
<svg class="a" style="left:1451px;top:117px;" width="22" height="21" viewBox="0 0 22 21"><path d="M1.3 0.9 H20.2 Q21 0.9 21 1.7 V3 L13.3 11.2 V19.5 H8.3 V11.2 L0.7 3 V1.7 Q0.7 0.9 1.3 0.9 Z" fill="#fafafa" stroke="#444" stroke-width="1.3" stroke-linejoin="round"/></svg>
<span class="t" style="top:149.01px;font-size:15px;left:1421.24px;letter-spacing:-0.318px;color:#242424;">Classificar</span>
<span class="t" style="top:169.01px;font-size:15px;left:1422.16px;letter-spacing:-0.070px;color:#242424;">e Filtrar</span>
<svg class="a" style="left:1475.5px;top:173.9px;" width="10" height="7" viewBox="0 0 10 7"><path d="M2 2 L5.0 5.2 L8 2" fill="none" stroke="#333" stroke-width="1.3" stroke-linecap="round" stroke-linejoin="round"/></svg>
<svg class="a" style="left:1517px;top:108px;" width="38" height="37" viewBox="0 0 38 37"><circle cx="23.5" cy="13.5" r="12.5" fill="#fafafa" stroke="#444" stroke-width="1.4"/><path d="M14.5 22.5 L1 36" stroke="#444" stroke-width="1.5" stroke-linecap="round"/></svg>
<span class="t" style="top:149.01px;font-size:15px;left:1499.97px;letter-spacing:-0.085px;color:#242424;">Localizar e</span>
<span class="t" style="top:169.01px;font-size:15px;left:1494.32px;letter-spacing:-0.218px;color:#242424;">Selecionar</span>
<svg class="a" style="left:1566.5px;top:173.9px;" width="10" height="7" viewBox="0 0 10 7"><path d="M2 2 L5.0 5.2 L8 2" fill="none" stroke="#333" stroke-width="1.3" stroke-linecap="round" stroke-linejoin="round"/></svg>
<svg class="a" style="left:1627px;top:108px;" width="37" height="36" viewBox="0 0 37 36"><rect x="1.2" y="1.2" width="33.6" height="33.2" fill="#fff" stroke="#d5532b" stroke-width="1.9"/>
<rect x="5.3" y="5" width="10.6" height="10.6" fill="none" stroke="#d5532b" stroke-width="1.6"/><rect x="20.3" y="5" width="10.6" height="10.6" fill="none" stroke="#d5532b" stroke-width="1.6"/>
<rect x="5.3" y="19.9" width="10.6" height="10.6" fill="none" stroke="#d5532b" stroke-width="1.6"/><rect x="20.3" y="19.9" width="10.6" height="10.6" fill="none" stroke="#d5532b" stroke-width="1.6"/></svg>
<span class="t" style="top:149.01px;font-size:15px;left:1602.12px;letter-spacing:-0.114px;color:#242424;">Suplementos</span>
<svg class="a" style="left:1719px;top:108px;" width="38" height="36" viewBox="0 0 38 36"><defs>
<linearGradient id="cpa" x1="0" y1="0" x2="0.15" y2="1"><stop offset="0" stop-color="#1a8fe8"/><stop offset=".28" stop-color="#1fa5d8"/><stop offset=".55" stop-color="#46b86a"/><stop offset=".8" stop-color="#c9d52c"/><stop offset="1" stop-color="#f5d417"/></linearGradient>
<linearGradient id="cpb" x1="0" y1="0" x2="1" y2="1"><stop offset="0" stop-color="#1b6fe0"/><stop offset="1" stop-color="#1a3fc4"/></linearGradient>
<linearGradient id="cpc" x1="0.2" y1="0" x2="0" y2="1"><stop offset="0" stop-color="#a44ff0"/><stop offset=".35" stop-color="#d857c0"/><stop offset=".65" stop-color="#f4567c"/><stop offset="1" stop-color="#ff9a3e"/></linearGradient>
<linearGradient id="cpd" x1="0" y1="0" x2="1" y2="1"><stop offset="0" stop-color="#f6572d"/><stop offset="1" stop-color="#e23a34"/></linearGradient>
</defs>
<path d="M20 1.1 H25 Q27.3 1.1 28.1 3.3 L29.4 7.2 Q30.2 9.8 33 10.6 L24 12.5 L19 6 Z" fill="url(#cpb)"/>
<path d="M18 34.7 H13.6 Q11.4 34.7 10.6 32.5 L9.4 28.8 Q8.6 26.2 5.6 25.4 L14.5 23.5 L19 30 Z" fill="url(#cpd)"/>
<path d="M8.2 1.1 H23 Q20.4 1.7 19.5 5 L14.9 21.6 Q13.7 25.5 10.3 25.5 H4 Q0.2 25.5 1.1 21.6 L4.6 5 Q5.6 1.1 8.2 1.1 Z" fill="url(#cpa)"/>
<path d="M29.4 34.7 H15 Q17.6 34.1 18.5 30.8 L23.1 14.5 Q24.3 10.6 27.7 10.6 H33.8 Q37.5 10.6 36.6 14.5 L33 30.8 Q32 34.7 29.4 34.7 Z" fill="url(#cpc)"/></svg>
<span class="t" style="top:149.01px;font-size:15px;left:1713.04px;letter-spacing:0.361px;color:#242424;">Copilot</span>
<svg class="a" style="left:1811px;top:110.6px;" width="33" height="37" viewBox="0 0 33 37"><path d="M13.5 29.3 H3.8 Q1.2 29.3 1.2 26.7 V3.6 Q1.2 1 3.8 1 H16.8 Q18 1 18.9 1.9 L23 6 Q23.9 6.9 23.9 8.1 V14.6" fill="none" stroke="#2d6fdb" stroke-width="1.5" stroke-linejoin="round" stroke-linecap="round"/>
<path d="M5.8 19.5 C9.3 18.3 11.8 12.8 11.8 9 C11.8 7 9.8 7.3 10.1 9.5 C10.6 13.2 14.3 16.6 17.8 16.8 C19.8 16.9 19.6 15.1 17.8 15.1 C13.3 15.1 8.3 17.3 5.8 19.5 Z" fill="none" stroke="#2d6fdb" stroke-width="1.1" stroke-linejoin="round"/>
<g fill="none" stroke="#2d6fdb" stroke-width="1.6" stroke-linecap="round"><path d="M21.6 23.6 L24 20 C27.5 15.5 33.8 20 30.2 24.8 L28.8 26.6"/><path d="M24.6 27.8 L22.4 31.2 C19 36 12.5 31.5 16 26.6 L17.4 24.8"/><path d="M20 29.6 L26.4 21.6"/></g></svg>
<span class="t" style="top:149.01px;font-size:15px;left:1809.94px;letter-spacing:-0.429px;color:#242424;">Crie</span>
<span class="t" style="top:169.01px;font-size:15px;left:1796.73px;letter-spacing:-0.728px;color:#242424;">um PDF</span>
<svg class="a" style="left:1884.5px;top:199.75px;" width="15" height="9" viewBox="0 0 15 9"><path d="M2 2 L7.5 7.5 L13 2" fill="none" stroke="#333" stroke-width="1.4" stroke-linecap="round" stroke-linejoin="round"/></svg>
<div class="a" style="left:1894px;top:270px;width:26px;height:683px;background:#e8ecea;"></div>
<div class="a" style="left:1897px;top:271px;width:21px;height:683.5px;border-radius:10.5px;background:#f5f6f6;"></div>
<svg class="a" style="left:1901px;top:276px;" width="13" height="9" viewBox="0 0 13 9"><path d="M6.5 1.5 L11.2 7.4 H1.8 Z" fill="#6b6b6b" stroke="#6b6b6b" stroke-width="1.7" stroke-linejoin="round"/></svg>
<svg class="a" style="left:1901px;top:940px;" width="13" height="9" viewBox="0 0 13 9"><path d="M6.5 7.5 L11.2 1.6 H1.8 Z" fill="#6b6b6b" stroke="#6b6b6b" stroke-width="1.7" stroke-linejoin="round"/></svg>
<div class="a" style="left:1902.5px;top:290.7px;width:10px;height:20.5px;border-radius:5px;background:#6e6e6e;"></div>
</div></body></html>
